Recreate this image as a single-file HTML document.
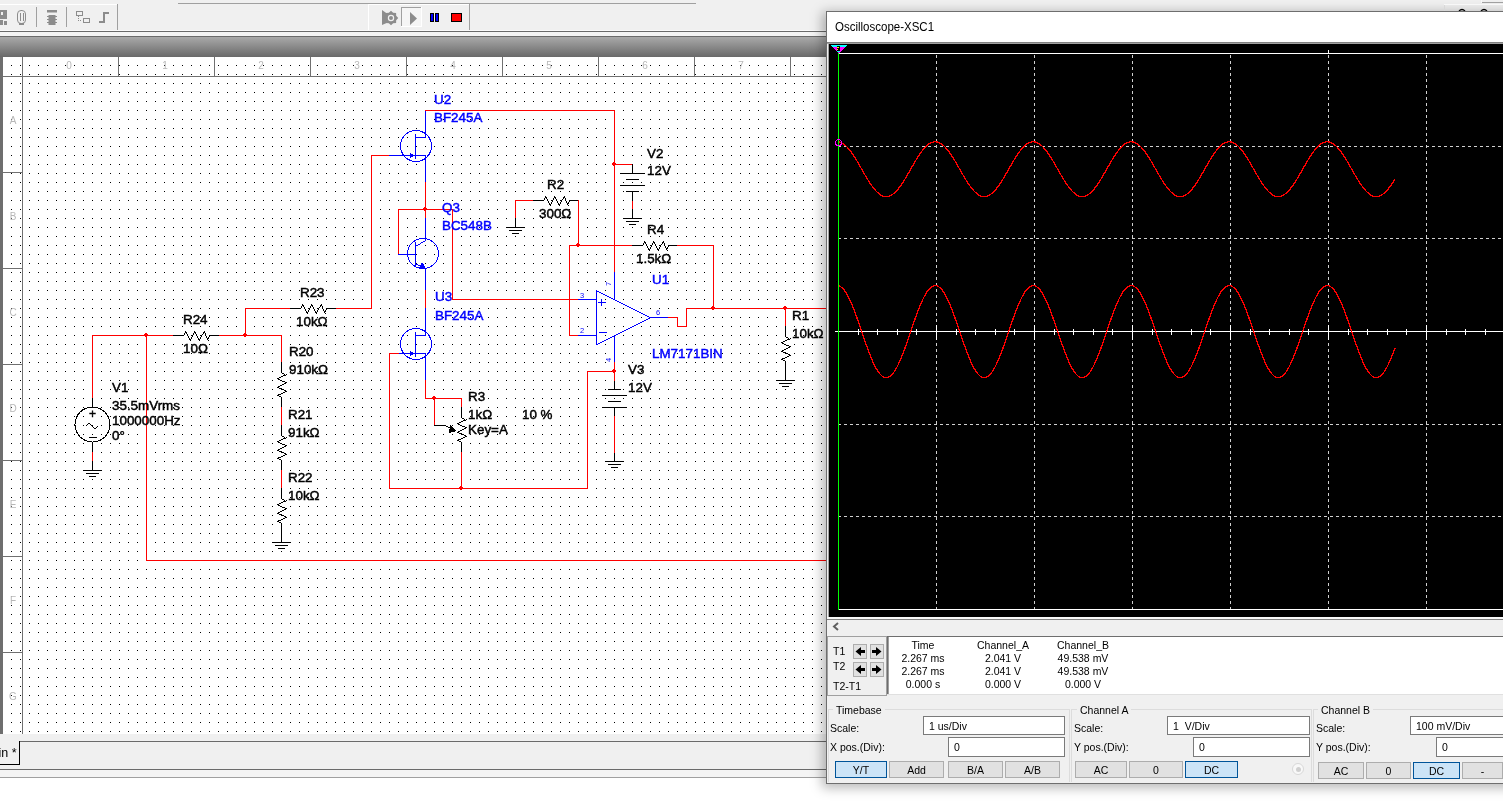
<!DOCTYPE html>
<html><head><meta charset="utf-8"><style>
*{margin:0;padding:0;box-sizing:border-box}
html,body{width:1503px;height:804px;overflow:hidden;background:#f0f0f0;font-family:"Liberation Sans",sans-serif}
.abs{position:absolute}
svg text{font-family:"Liberation Sans",sans-serif}
.ui{font-size:10.5px;color:#000;position:absolute;white-space:nowrap}
.btn{position:absolute;background:#e1e1e1;border:1px solid #adadad;font-size:10.5px;text-align:center;color:#000}
.sel{background:#cce4f7;border-color:#005499}
.inp{position:absolute;background:#fff;border:1px solid #7a7a7a;font-size:10.5px;padding-left:5px;line-height:18px}
</style></head><body><div style="position:absolute;left:0;top:0;width:1503px;height:804px;will-change:transform;overflow:hidden">
<svg class="abs" style="left:0;top:0" width="1503" height="804" shape-rendering="crispEdges">
<defs>
<pattern id="dots" x="11" y="65" width="9" height="9" patternUnits="userSpaceOnUse"><rect width="1" height="1" fill="#000"/></pattern>
<linearGradient id="gbar" x1="0" y1="0" x2="0" y2="1"><stop offset="0" stop-color="#a9a9a9"/><stop offset="1" stop-color="#696969"/></linearGradient>
</defs>
<!-- top toolbar -->
<rect x="0" y="0" width="1503" height="31" fill="#f0f0f0"/>
<line x1="178" y1="3.5" x2="696" y2="3.5" stroke="#a0a0a0"/>
<rect x="0" y="4" width="118" height="1" fill="#fff"/>
<rect x="117" y="4" width="1" height="27" fill="#a0a0a0"/>
<rect x="36" y="7" width="1" height="20" fill="#a0a0a0"/>
<rect x="66" y="7" width="1" height="20" fill="#a0a0a0"/>
<rect x="368" y="4" width="102" height="1" fill="#fff"/>
<rect x="368" y="4" width="1" height="27" fill="#fff"/>
<rect x="469" y="4" width="1" height="27" fill="#a0a0a0"/>
<rect x="0" y="30" width="1503" height="1" fill="#fafafa"/>
<rect x="0" y="31" width="1503" height="1" fill="#6a6a6a"/>
<rect x="0" y="32" width="1503" height="4" fill="#f4f4f4"/>
<rect x="0" y="36" width="1503" height="1" fill="#6a6a6a"/>
<rect x="0" y="37" width="1503" height="20" fill="url(#gbar)"/>
<rect x="0" y="57" width="3" height="677" fill="#6e6e6e"/>
<!-- canvas -->
<rect x="3" y="57" width="823" height="677" fill="#fff"/>
<rect x="3" y="57" width="823" height="677" fill="url(#dots)"/>
<rect x="3" y="76" width="823" height="1" fill="#707070"/>
<rect x="22" y="57" width="1" height="677" fill="#707070"/>
<rect x="22" y="57" width="1" height="19" fill="#707070"/>
<text x="69" y="69" fill="#b8b8b8" font-size="10" text-anchor="middle" shape-rendering="auto">0</text>
<rect x="118" y="57" width="1" height="19" fill="#707070"/>
<text x="165" y="69" fill="#b8b8b8" font-size="10" text-anchor="middle" shape-rendering="auto">1</text>
<rect x="214" y="57" width="1" height="19" fill="#707070"/>
<text x="261" y="69" fill="#b8b8b8" font-size="10" text-anchor="middle" shape-rendering="auto">2</text>
<rect x="310" y="57" width="1" height="19" fill="#707070"/>
<text x="357" y="69" fill="#b8b8b8" font-size="10" text-anchor="middle" shape-rendering="auto">3</text>
<rect x="406" y="57" width="1" height="19" fill="#707070"/>
<text x="453" y="69" fill="#b8b8b8" font-size="10" text-anchor="middle" shape-rendering="auto">4</text>
<rect x="502" y="57" width="1" height="19" fill="#707070"/>
<text x="549" y="69" fill="#b8b8b8" font-size="10" text-anchor="middle" shape-rendering="auto">5</text>
<rect x="598" y="57" width="1" height="19" fill="#707070"/>
<text x="645" y="69" fill="#b8b8b8" font-size="10" text-anchor="middle" shape-rendering="auto">6</text>
<rect x="694" y="57" width="1" height="19" fill="#707070"/>
<text x="741" y="69" fill="#b8b8b8" font-size="10" text-anchor="middle" shape-rendering="auto">7</text>
<rect x="790" y="57" width="1" height="19" fill="#707070"/>
<rect x="3" y="172" width="19" height="1" fill="#707070"/>
<rect x="3" y="268" width="19" height="1" fill="#707070"/>
<rect x="3" y="364" width="19" height="1" fill="#707070"/>
<rect x="3" y="460" width="19" height="1" fill="#707070"/>
<rect x="3" y="556" width="19" height="1" fill="#707070"/>
<rect x="3" y="652" width="19" height="1" fill="#707070"/>
<rect x="3" y="748" width="19" height="1" fill="#707070"/>
<text x="13" y="124" fill="#b8b8b8" font-size="10" text-anchor="middle">A</text>
<text x="13" y="220" fill="#b8b8b8" font-size="10" text-anchor="middle">B</text>
<text x="13" y="316" fill="#b8b8b8" font-size="10" text-anchor="middle">C</text>
<text x="13" y="412" fill="#b8b8b8" font-size="10" text-anchor="middle">D</text>
<text x="13" y="508" fill="#b8b8b8" font-size="10" text-anchor="middle">E</text>
<text x="13" y="604" fill="#b8b8b8" font-size="10" text-anchor="middle">F</text>
<text x="13" y="700" fill="#b8b8b8" font-size="10" text-anchor="middle">G</text>
<g shape-rendering="crispEdges">
<polyline points="92.5,398.5 92.5,335.5 173.5,335.5" fill="none" stroke="#ff0000" stroke-width="1" stroke-linecap="square" stroke-linejoin="bevel"/>
<polyline points="219.5,335.5 281.5,335.5 281.5,362.5" fill="none" stroke="#ff0000" stroke-width="1" stroke-linecap="square" stroke-linejoin="bevel"/>
<polyline points="146.5,335.5 146.5,560.5 826.5,560.5" fill="none" stroke="#ff0000" stroke-width="1" stroke-linecap="square" stroke-linejoin="bevel"/>
<polyline points="245.5,335.5 245.5,308.5 290.5,308.5" fill="none" stroke="#ff0000" stroke-width="1" stroke-linecap="square" stroke-linejoin="bevel"/>
<polyline points="335.5,308.5 371.5,308.5 371.5,155.5 389.5,155.5" fill="none" stroke="#ff0000" stroke-width="1" stroke-linecap="square" stroke-linejoin="bevel"/>
<polyline points="389.5,155.5 416.5,155.5" fill="none" stroke="#0000ff" stroke-width="1" stroke-linecap="square" stroke-linejoin="bevel"/>
<circle cx="416" cy="146" r="15.5" fill="none" stroke="#0000ff" stroke-width="1"/>
<polyline points="415.5,134.5 415.5,158.5" fill="none" stroke="#0000ff" stroke-width="1" stroke-linecap="square" stroke-linejoin="bevel"/>
<polyline points="415.5,137.5 425.5,137.5" fill="none" stroke="#0000ff" stroke-width="1" stroke-linecap="square" stroke-linejoin="bevel"/>
<polyline points="415.5,155.5 425.5,155.5" fill="none" stroke="#0000ff" stroke-width="1" stroke-linecap="square" stroke-linejoin="bevel"/>
<polygon points="410,152.5 414,155.5 410,158.5" fill="#0000ff"/>
<polyline points="425.5,137.5 425.5,110.5" fill="none" stroke="#0000ff" stroke-width="1" stroke-linecap="square" stroke-linejoin="bevel"/>
<polyline points="425.5,110.5 614.5,110.5 614.5,272.5" fill="none" stroke="#ff0000" stroke-width="1" stroke-linecap="square" stroke-linejoin="bevel"/>
<polyline points="614.5,272.5 614.5,299.5" fill="none" stroke="#0000ff" stroke-width="1" stroke-linecap="square" stroke-linejoin="bevel"/>
<polyline points="425.5,155.5 425.5,182.5" fill="none" stroke="#0000ff" stroke-width="1" stroke-linecap="square" stroke-linejoin="bevel"/>
<polyline points="425.5,182.5 425.5,218.5" fill="none" stroke="#ff0000" stroke-width="1" stroke-linecap="square" stroke-linejoin="bevel"/>
<polyline points="425.5,218.5 425.5,239.5" fill="none" stroke="#0000ff" stroke-width="1" stroke-linecap="square" stroke-linejoin="bevel"/>
<polyline points="398.5,254.5 398.5,209.5 452.5,209.5 452.5,299.5 578.5,299.5" fill="none" stroke="#ff0000" stroke-width="1" stroke-linecap="square" stroke-linejoin="bevel"/>
<polyline points="398.5,254.5 415.5,254.5" fill="none" stroke="#0000ff" stroke-width="1" stroke-linecap="square" stroke-linejoin="bevel"/>
<ellipse cx="423" cy="253.5" rx="15.5" ry="15" fill="none" stroke="#0000ff" stroke-width="1"/>
<polyline points="415.5,242.5 415.5,265.5" fill="none" stroke="#0000ff" stroke-width="1" stroke-linecap="square" stroke-linejoin="bevel"/>
<g fill="#0000ff"><rect x="415" y="246" width="1" height="1"/><rect x="416" y="245" width="1" height="1"/><rect x="417" y="245" width="1" height="1"/><rect x="418" y="244" width="1" height="1"/><rect x="419" y="244" width="1" height="1"/><rect x="420" y="243" width="1" height="1"/><rect x="421" y="242" width="1" height="1"/><rect x="422" y="242" width="1" height="1"/><rect x="423" y="241" width="1" height="1"/><rect x="424" y="241" width="1" height="1"/><rect x="425" y="240" width="1" height="1"/></g>
<g fill="#0000ff"><rect x="415" y="263" width="1" height="1"/><rect x="416" y="264" width="1" height="1"/><rect x="417" y="264" width="1" height="1"/><rect x="418" y="265" width="1" height="1"/><rect x="419" y="265" width="1" height="1"/><rect x="420" y="266" width="1" height="1"/><rect x="421" y="266" width="1" height="1"/><rect x="422" y="267" width="1" height="1"/><rect x="423" y="267" width="1" height="1"/><rect x="424" y="268" width="1" height="1"/><rect x="425" y="268" width="1" height="1"/></g>
<polygon points="422,262 419,268.5 426,268.5" fill="#0000ff"/>
<polyline points="425.5,269.5 425.5,290.5" fill="none" stroke="#0000ff" stroke-width="1" stroke-linecap="square" stroke-linejoin="bevel"/>
<polyline points="425.5,290.5 425.5,308.5" fill="none" stroke="#ff0000" stroke-width="1" stroke-linecap="square" stroke-linejoin="bevel"/>
<polyline points="425.5,308.5 425.5,335.5" fill="none" stroke="#0000ff" stroke-width="1" stroke-linecap="square" stroke-linejoin="bevel"/>
<circle cx="416" cy="344" r="15.5" fill="none" stroke="#0000ff" stroke-width="1"/>
<polyline points="415.5,332.5 415.5,356.5" fill="none" stroke="#0000ff" stroke-width="1" stroke-linecap="square" stroke-linejoin="bevel"/>
<polyline points="415.5,335.5 425.5,335.5" fill="none" stroke="#0000ff" stroke-width="1" stroke-linecap="square" stroke-linejoin="bevel"/>
<polyline points="415.5,353.5 425.5,353.5" fill="none" stroke="#0000ff" stroke-width="1" stroke-linecap="square" stroke-linejoin="bevel"/>
<polygon points="410,350.5 414,353.5 410,356.5" fill="#0000ff"/>
<polyline points="425.5,353.5 425.5,380.5" fill="none" stroke="#0000ff" stroke-width="1" stroke-linecap="square" stroke-linejoin="bevel"/>
<polyline points="425.5,380.5 425.5,398.5 461.5,398.5 461.5,407.5" fill="none" stroke="#ff0000" stroke-width="1" stroke-linecap="square" stroke-linejoin="bevel"/>
<polyline points="398.5,353.5 416.5,353.5" fill="none" stroke="#0000ff" stroke-width="1" stroke-linecap="square" stroke-linejoin="bevel"/>
<polyline points="398.5,353.5 389.5,353.5 389.5,488.5 587.5,488.5 587.5,371.5 614.5,371.5" fill="none" stroke="#ff0000" stroke-width="1" stroke-linecap="square" stroke-linejoin="bevel"/>
<polyline points="614.5,362.5 614.5,336.5" fill="none" stroke="#0000ff" stroke-width="1" stroke-linecap="square" stroke-linejoin="bevel"/>
<polyline points="614.5,362.5 614.5,371.5" fill="none" stroke="#ff0000" stroke-width="1" stroke-linecap="square" stroke-linejoin="bevel"/>
<polyline points="461.5,407.5 461.5,417.5" fill="none" stroke="#000000" stroke-width="1" stroke-linecap="square" stroke-linejoin="bevel"/>
<g fill="#000000"><rect x="457" y="423" width="1" height="1"/><rect x="457" y="432" width="1" height="1"/><rect x="457" y="440" width="1" height="1"/><rect x="458" y="423" width="1" height="1"/><rect x="458" y="424" width="1" height="1"/><rect x="458" y="431" width="1" height="1"/><rect x="458" y="432" width="1" height="1"/><rect x="458" y="439" width="1" height="1"/><rect x="458" y="440" width="1" height="1"/><rect x="459" y="422" width="1" height="1"/><rect x="459" y="424" width="1" height="1"/><rect x="459" y="431" width="1" height="1"/><rect x="459" y="433" width="1" height="1"/><rect x="459" y="439" width="1" height="1"/><rect x="459" y="441" width="1" height="1"/><rect x="460" y="422" width="1" height="1"/><rect x="460" y="425" width="1" height="1"/><rect x="460" y="430" width="1" height="1"/><rect x="460" y="433" width="1" height="1"/><rect x="460" y="439" width="1" height="1"/><rect x="460" y="441" width="1" height="1"/><rect x="461" y="417" width="1" height="1"/><rect x="461" y="421" width="1" height="1"/><rect x="461" y="425" width="1" height="1"/><rect x="461" y="430" width="1" height="1"/><rect x="461" y="433" width="1" height="1"/><rect x="461" y="438" width="1" height="1"/><rect x="461" y="442" width="1" height="1"/><rect x="462" y="418" width="1" height="1"/><rect x="462" y="421" width="1" height="1"/><rect x="462" y="426" width="1" height="1"/><rect x="462" y="429" width="1" height="1"/><rect x="462" y="434" width="1" height="1"/><rect x="462" y="438" width="1" height="1"/><rect x="463" y="418" width="1" height="1"/><rect x="463" y="420" width="1" height="1"/><rect x="463" y="426" width="1" height="1"/><rect x="463" y="429" width="1" height="1"/><rect x="463" y="434" width="1" height="1"/><rect x="463" y="437" width="1" height="1"/><rect x="464" y="419" width="1" height="1"/><rect x="464" y="420" width="1" height="1"/><rect x="464" y="426" width="1" height="1"/><rect x="464" y="428" width="1" height="1"/><rect x="464" y="435" width="1" height="1"/><rect x="464" y="437" width="1" height="1"/><rect x="465" y="420" width="1" height="1"/><rect x="465" y="427" width="1" height="1"/><rect x="465" y="428" width="1" height="1"/><rect x="465" y="435" width="1" height="1"/><rect x="465" y="436" width="1" height="1"/><rect x="466" y="419" width="1" height="1"/><rect x="466" y="427" width="1" height="1"/><rect x="466" y="436" width="1" height="1"/></g>
<polyline points="461.5,442.5 461.5,452.5" fill="none" stroke="#000000" stroke-width="1" stroke-linecap="square" stroke-linejoin="bevel"/>
<polyline points="461.5,452.5 461.5,488.5" fill="none" stroke="#ff0000" stroke-width="1" stroke-linecap="square" stroke-linejoin="bevel"/>
<polyline points="434.5,398.5 434.5,425.5" fill="none" stroke="#ff0000" stroke-width="1" stroke-linecap="square" stroke-linejoin="bevel"/>
<polyline points="434.5,425.5 445.5,425.5" fill="none" stroke="#000000" stroke-width="1" stroke-linecap="square" stroke-linejoin="bevel"/>
<g fill="#000000"><rect x="445" y="425" width="1" height="1"/><rect x="446" y="426" width="1" height="1"/><rect x="447" y="426" width="1" height="1"/><rect x="448" y="427" width="1" height="1"/><rect x="449" y="427" width="1" height="1"/><rect x="450" y="428" width="1" height="1"/><rect x="451" y="428" width="1" height="1"/><rect x="452" y="429" width="1" height="1"/><rect x="453" y="429" width="1" height="1"/><rect x="454" y="430" width="1" height="1"/><rect x="455" y="430" width="1" height="1"/></g>
<polygon points="450,425 457,431 449,433" fill="#000000"/>
<polyline points="281.5,362.5 281.5,372.5" fill="none" stroke="#000000" stroke-width="1" stroke-linecap="square" stroke-linejoin="bevel"/>
<g fill="#000000"><rect x="277" y="378" width="1" height="1"/><rect x="277" y="387" width="1" height="1"/><rect x="277" y="395" width="1" height="1"/><rect x="278" y="378" width="1" height="1"/><rect x="278" y="379" width="1" height="1"/><rect x="278" y="386" width="1" height="1"/><rect x="278" y="387" width="1" height="1"/><rect x="278" y="394" width="1" height="1"/><rect x="278" y="395" width="1" height="1"/><rect x="279" y="377" width="1" height="1"/><rect x="279" y="379" width="1" height="1"/><rect x="279" y="386" width="1" height="1"/><rect x="279" y="388" width="1" height="1"/><rect x="279" y="394" width="1" height="1"/><rect x="279" y="396" width="1" height="1"/><rect x="280" y="377" width="1" height="1"/><rect x="280" y="380" width="1" height="1"/><rect x="280" y="385" width="1" height="1"/><rect x="280" y="388" width="1" height="1"/><rect x="280" y="394" width="1" height="1"/><rect x="280" y="396" width="1" height="1"/><rect x="281" y="372" width="1" height="1"/><rect x="281" y="376" width="1" height="1"/><rect x="281" y="380" width="1" height="1"/><rect x="281" y="385" width="1" height="1"/><rect x="281" y="388" width="1" height="1"/><rect x="281" y="393" width="1" height="1"/><rect x="281" y="397" width="1" height="1"/><rect x="282" y="373" width="1" height="1"/><rect x="282" y="376" width="1" height="1"/><rect x="282" y="381" width="1" height="1"/><rect x="282" y="384" width="1" height="1"/><rect x="282" y="389" width="1" height="1"/><rect x="282" y="393" width="1" height="1"/><rect x="283" y="373" width="1" height="1"/><rect x="283" y="375" width="1" height="1"/><rect x="283" y="381" width="1" height="1"/><rect x="283" y="384" width="1" height="1"/><rect x="283" y="389" width="1" height="1"/><rect x="283" y="392" width="1" height="1"/><rect x="284" y="374" width="1" height="1"/><rect x="284" y="375" width="1" height="1"/><rect x="284" y="381" width="1" height="1"/><rect x="284" y="383" width="1" height="1"/><rect x="284" y="390" width="1" height="1"/><rect x="284" y="392" width="1" height="1"/><rect x="285" y="375" width="1" height="1"/><rect x="285" y="382" width="1" height="1"/><rect x="285" y="383" width="1" height="1"/><rect x="285" y="390" width="1" height="1"/><rect x="285" y="391" width="1" height="1"/><rect x="286" y="374" width="1" height="1"/><rect x="286" y="382" width="1" height="1"/><rect x="286" y="391" width="1" height="1"/></g>
<polyline points="281.5,397.5 281.5,407.5" fill="none" stroke="#000000" stroke-width="1" stroke-linecap="square" stroke-linejoin="bevel"/>
<polyline points="281.5,407.5 281.5,425.5" fill="none" stroke="#ff0000" stroke-width="1" stroke-linecap="square" stroke-linejoin="bevel"/>
<polyline points="281.5,425.5 281.5,435.5" fill="none" stroke="#000000" stroke-width="1" stroke-linecap="square" stroke-linejoin="bevel"/>
<g fill="#000000"><rect x="277" y="441" width="1" height="1"/><rect x="277" y="450" width="1" height="1"/><rect x="277" y="458" width="1" height="1"/><rect x="278" y="441" width="1" height="1"/><rect x="278" y="442" width="1" height="1"/><rect x="278" y="449" width="1" height="1"/><rect x="278" y="450" width="1" height="1"/><rect x="278" y="457" width="1" height="1"/><rect x="278" y="458" width="1" height="1"/><rect x="279" y="440" width="1" height="1"/><rect x="279" y="442" width="1" height="1"/><rect x="279" y="449" width="1" height="1"/><rect x="279" y="451" width="1" height="1"/><rect x="279" y="457" width="1" height="1"/><rect x="279" y="459" width="1" height="1"/><rect x="280" y="440" width="1" height="1"/><rect x="280" y="443" width="1" height="1"/><rect x="280" y="448" width="1" height="1"/><rect x="280" y="451" width="1" height="1"/><rect x="280" y="457" width="1" height="1"/><rect x="280" y="459" width="1" height="1"/><rect x="281" y="435" width="1" height="1"/><rect x="281" y="439" width="1" height="1"/><rect x="281" y="443" width="1" height="1"/><rect x="281" y="448" width="1" height="1"/><rect x="281" y="451" width="1" height="1"/><rect x="281" y="456" width="1" height="1"/><rect x="281" y="460" width="1" height="1"/><rect x="282" y="436" width="1" height="1"/><rect x="282" y="439" width="1" height="1"/><rect x="282" y="444" width="1" height="1"/><rect x="282" y="447" width="1" height="1"/><rect x="282" y="452" width="1" height="1"/><rect x="282" y="456" width="1" height="1"/><rect x="283" y="436" width="1" height="1"/><rect x="283" y="438" width="1" height="1"/><rect x="283" y="444" width="1" height="1"/><rect x="283" y="447" width="1" height="1"/><rect x="283" y="452" width="1" height="1"/><rect x="283" y="455" width="1" height="1"/><rect x="284" y="437" width="1" height="1"/><rect x="284" y="438" width="1" height="1"/><rect x="284" y="444" width="1" height="1"/><rect x="284" y="446" width="1" height="1"/><rect x="284" y="453" width="1" height="1"/><rect x="284" y="455" width="1" height="1"/><rect x="285" y="438" width="1" height="1"/><rect x="285" y="445" width="1" height="1"/><rect x="285" y="446" width="1" height="1"/><rect x="285" y="453" width="1" height="1"/><rect x="285" y="454" width="1" height="1"/><rect x="286" y="437" width="1" height="1"/><rect x="286" y="445" width="1" height="1"/><rect x="286" y="454" width="1" height="1"/></g>
<polyline points="281.5,460.5 281.5,470.5" fill="none" stroke="#000000" stroke-width="1" stroke-linecap="square" stroke-linejoin="bevel"/>
<polyline points="281.5,470.5 281.5,488.5" fill="none" stroke="#ff0000" stroke-width="1" stroke-linecap="square" stroke-linejoin="bevel"/>
<polyline points="281.5,488.5 281.5,498.5" fill="none" stroke="#000000" stroke-width="1" stroke-linecap="square" stroke-linejoin="bevel"/>
<g fill="#000000"><rect x="277" y="504" width="1" height="1"/><rect x="277" y="513" width="1" height="1"/><rect x="277" y="521" width="1" height="1"/><rect x="278" y="504" width="1" height="1"/><rect x="278" y="505" width="1" height="1"/><rect x="278" y="512" width="1" height="1"/><rect x="278" y="513" width="1" height="1"/><rect x="278" y="520" width="1" height="1"/><rect x="278" y="521" width="1" height="1"/><rect x="279" y="503" width="1" height="1"/><rect x="279" y="505" width="1" height="1"/><rect x="279" y="512" width="1" height="1"/><rect x="279" y="514" width="1" height="1"/><rect x="279" y="520" width="1" height="1"/><rect x="279" y="522" width="1" height="1"/><rect x="280" y="503" width="1" height="1"/><rect x="280" y="506" width="1" height="1"/><rect x="280" y="511" width="1" height="1"/><rect x="280" y="514" width="1" height="1"/><rect x="280" y="520" width="1" height="1"/><rect x="280" y="522" width="1" height="1"/><rect x="281" y="498" width="1" height="1"/><rect x="281" y="502" width="1" height="1"/><rect x="281" y="506" width="1" height="1"/><rect x="281" y="511" width="1" height="1"/><rect x="281" y="514" width="1" height="1"/><rect x="281" y="519" width="1" height="1"/><rect x="281" y="523" width="1" height="1"/><rect x="282" y="499" width="1" height="1"/><rect x="282" y="502" width="1" height="1"/><rect x="282" y="507" width="1" height="1"/><rect x="282" y="510" width="1" height="1"/><rect x="282" y="515" width="1" height="1"/><rect x="282" y="519" width="1" height="1"/><rect x="283" y="499" width="1" height="1"/><rect x="283" y="501" width="1" height="1"/><rect x="283" y="507" width="1" height="1"/><rect x="283" y="510" width="1" height="1"/><rect x="283" y="515" width="1" height="1"/><rect x="283" y="518" width="1" height="1"/><rect x="284" y="500" width="1" height="1"/><rect x="284" y="501" width="1" height="1"/><rect x="284" y="507" width="1" height="1"/><rect x="284" y="509" width="1" height="1"/><rect x="284" y="516" width="1" height="1"/><rect x="284" y="518" width="1" height="1"/><rect x="285" y="501" width="1" height="1"/><rect x="285" y="508" width="1" height="1"/><rect x="285" y="509" width="1" height="1"/><rect x="285" y="516" width="1" height="1"/><rect x="285" y="517" width="1" height="1"/><rect x="286" y="500" width="1" height="1"/><rect x="286" y="508" width="1" height="1"/><rect x="286" y="517" width="1" height="1"/></g>
<polyline points="281.5,523.5 281.5,542.5" fill="none" stroke="#000000" stroke-width="1" stroke-linecap="square" stroke-linejoin="bevel"/>
<polyline points="272.5,542.5 290.5,542.5" fill="none" stroke="#000000" stroke-width="1" stroke-linecap="square" stroke-linejoin="bevel"/>
<polyline points="275.5,545.5 287.5,545.5" fill="none" stroke="#000000" stroke-width="1" stroke-linecap="square" stroke-linejoin="bevel"/>
<polyline points="278.5,548.5 284.5,548.5" fill="none" stroke="#000000" stroke-width="1" stroke-linecap="square" stroke-linejoin="bevel"/>
<polyline points="173.5,335.5 183.5,335.5" fill="none" stroke="#000000" stroke-width="1" stroke-linecap="square" stroke-linejoin="bevel"/>
<g fill="#000000"><rect x="183" y="335" width="1" height="1"/><rect x="184" y="333" width="1" height="1"/><rect x="184" y="334" width="1" height="1"/><rect x="185" y="331" width="1" height="1"/><rect x="185" y="332" width="1" height="1"/><rect x="186" y="332" width="1" height="1"/><rect x="186" y="333" width="1" height="1"/><rect x="187" y="334" width="1" height="1"/><rect x="187" y="335" width="1" height="1"/><rect x="188" y="336" width="1" height="1"/><rect x="188" y="337" width="1" height="1"/><rect x="189" y="338" width="1" height="1"/><rect x="189" y="339" width="1" height="1"/><rect x="190" y="339" width="1" height="1"/><rect x="190" y="340" width="1" height="1"/><rect x="191" y="337" width="1" height="1"/><rect x="191" y="338" width="1" height="1"/><rect x="192" y="335" width="1" height="1"/><rect x="192" y="336" width="1" height="1"/><rect x="193" y="333" width="1" height="1"/><rect x="193" y="334" width="1" height="1"/><rect x="194" y="331" width="1" height="1"/><rect x="194" y="332" width="1" height="1"/><rect x="195" y="332" width="1" height="1"/><rect x="195" y="333" width="1" height="1"/><rect x="196" y="334" width="1" height="1"/><rect x="196" y="335" width="1" height="1"/><rect x="197" y="336" width="1" height="1"/><rect x="197" y="337" width="1" height="1"/><rect x="198" y="338" width="1" height="1"/><rect x="198" y="339" width="1" height="1"/><rect x="199" y="339" width="1" height="1"/><rect x="199" y="340" width="1" height="1"/><rect x="200" y="337" width="1" height="1"/><rect x="200" y="338" width="1" height="1"/><rect x="201" y="335" width="1" height="1"/><rect x="201" y="336" width="1" height="1"/><rect x="202" y="334" width="1" height="1"/><rect x="203" y="332" width="1" height="1"/><rect x="203" y="333" width="1" height="1"/><rect x="204" y="331" width="1" height="1"/><rect x="204" y="332" width="1" height="1"/><rect x="205" y="333" width="1" height="1"/><rect x="205" y="334" width="1" height="1"/><rect x="205" y="335" width="1" height="1"/><rect x="206" y="336" width="1" height="1"/><rect x="206" y="337" width="1" height="1"/><rect x="207" y="338" width="1" height="1"/><rect x="207" y="339" width="1" height="1"/><rect x="208" y="337" width="1" height="1"/><rect x="208" y="338" width="1" height="1"/><rect x="208" y="340" width="1" height="1"/><rect x="209" y="335" width="1" height="1"/><rect x="209" y="336" width="1" height="1"/></g>
<polyline points="209.5,335.5 218.5,335.5" fill="none" stroke="#000000" stroke-width="1" stroke-linecap="square" stroke-linejoin="bevel"/>
<polyline points="290.5,308.5 300.5,308.5" fill="none" stroke="#000000" stroke-width="1" stroke-linecap="square" stroke-linejoin="bevel"/>
<g fill="#000000"><rect x="300" y="308" width="1" height="1"/><rect x="301" y="306" width="1" height="1"/><rect x="301" y="307" width="1" height="1"/><rect x="302" y="304" width="1" height="1"/><rect x="302" y="305" width="1" height="1"/><rect x="303" y="305" width="1" height="1"/><rect x="303" y="306" width="1" height="1"/><rect x="304" y="307" width="1" height="1"/><rect x="304" y="308" width="1" height="1"/><rect x="305" y="309" width="1" height="1"/><rect x="305" y="310" width="1" height="1"/><rect x="306" y="311" width="1" height="1"/><rect x="306" y="312" width="1" height="1"/><rect x="307" y="312" width="1" height="1"/><rect x="307" y="313" width="1" height="1"/><rect x="308" y="310" width="1" height="1"/><rect x="308" y="311" width="1" height="1"/><rect x="309" y="308" width="1" height="1"/><rect x="309" y="309" width="1" height="1"/><rect x="310" y="306" width="1" height="1"/><rect x="310" y="307" width="1" height="1"/><rect x="311" y="304" width="1" height="1"/><rect x="311" y="305" width="1" height="1"/><rect x="312" y="305" width="1" height="1"/><rect x="312" y="306" width="1" height="1"/><rect x="313" y="307" width="1" height="1"/><rect x="313" y="308" width="1" height="1"/><rect x="314" y="309" width="1" height="1"/><rect x="314" y="310" width="1" height="1"/><rect x="315" y="311" width="1" height="1"/><rect x="315" y="312" width="1" height="1"/><rect x="316" y="312" width="1" height="1"/><rect x="316" y="313" width="1" height="1"/><rect x="317" y="310" width="1" height="1"/><rect x="317" y="311" width="1" height="1"/><rect x="318" y="308" width="1" height="1"/><rect x="318" y="309" width="1" height="1"/><rect x="319" y="307" width="1" height="1"/><rect x="320" y="305" width="1" height="1"/><rect x="320" y="306" width="1" height="1"/><rect x="321" y="304" width="1" height="1"/><rect x="321" y="305" width="1" height="1"/><rect x="322" y="306" width="1" height="1"/><rect x="322" y="307" width="1" height="1"/><rect x="322" y="308" width="1" height="1"/><rect x="323" y="309" width="1" height="1"/><rect x="323" y="310" width="1" height="1"/><rect x="324" y="311" width="1" height="1"/><rect x="324" y="312" width="1" height="1"/><rect x="325" y="310" width="1" height="1"/><rect x="325" y="311" width="1" height="1"/><rect x="325" y="313" width="1" height="1"/><rect x="326" y="308" width="1" height="1"/><rect x="326" y="309" width="1" height="1"/></g>
<polyline points="326.5,308.5 335.5,308.5" fill="none" stroke="#000000" stroke-width="1" stroke-linecap="square" stroke-linejoin="bevel"/>
<polyline points="92.5,398.5 92.5,407.5" fill="none" stroke="#000000" stroke-width="1" stroke-linecap="square" stroke-linejoin="bevel"/>
<circle cx="92.5" cy="424.5" r="17.5" fill="none" stroke="#000000" stroke-width="1"/>
<polyline points="92.5,442.5 92.5,452.5" fill="none" stroke="#000000" stroke-width="1" stroke-linecap="square" stroke-linejoin="bevel"/>
<polyline points="92.5,452.5 92.5,461.5" fill="none" stroke="#ff0000" stroke-width="1" stroke-linecap="square" stroke-linejoin="bevel"/>
<polyline points="92.5,461.5 92.5,470.5" fill="none" stroke="#000000" stroke-width="1" stroke-linecap="square" stroke-linejoin="bevel"/>
<polyline points="83.5,470.5 101.5,470.5" fill="none" stroke="#000000" stroke-width="1" stroke-linecap="square" stroke-linejoin="bevel"/>
<polyline points="86.5,473.5 98.5,473.5" fill="none" stroke="#000000" stroke-width="1" stroke-linecap="square" stroke-linejoin="bevel"/>
<polyline points="89.5,476.5 95.5,476.5" fill="none" stroke="#000000" stroke-width="1" stroke-linecap="square" stroke-linejoin="bevel"/>
<text x="92.5" y="418" fill="#000000" stroke="#000000" stroke-width="0.45" font-size="12" text-anchor="middle" >+</text>
<path d="M86,426 q3,-5 6,0 t6,0" fill="none" stroke="#000000" stroke-width="1"/>
<polyline points="89.5,437.5 96.5,437.5" fill="none" stroke="#000000" stroke-width="1" stroke-linecap="square" stroke-linejoin="bevel"/>
<polyline points="515.5,218.5 515.5,200.5 533.5,200.5" fill="none" stroke="#ff0000" stroke-width="1" stroke-linecap="square" stroke-linejoin="bevel"/>
<polyline points="515.5,218.5 515.5,227.5" fill="none" stroke="#000000" stroke-width="1" stroke-linecap="square" stroke-linejoin="bevel"/>
<polyline points="506.5,227.5 524.5,227.5" fill="none" stroke="#000000" stroke-width="1" stroke-linecap="square" stroke-linejoin="bevel"/>
<polyline points="509.5,230.5 521.5,230.5" fill="none" stroke="#000000" stroke-width="1" stroke-linecap="square" stroke-linejoin="bevel"/>
<polyline points="512.5,233.5 518.5,233.5" fill="none" stroke="#000000" stroke-width="1" stroke-linecap="square" stroke-linejoin="bevel"/>
<polyline points="533.5,200.5 543.5,200.5" fill="none" stroke="#000000" stroke-width="1" stroke-linecap="square" stroke-linejoin="bevel"/>
<g fill="#000000"><rect x="543" y="200" width="1" height="1"/><rect x="544" y="198" width="1" height="1"/><rect x="544" y="199" width="1" height="1"/><rect x="545" y="196" width="1" height="1"/><rect x="545" y="197" width="1" height="1"/><rect x="546" y="197" width="1" height="1"/><rect x="546" y="198" width="1" height="1"/><rect x="547" y="199" width="1" height="1"/><rect x="547" y="200" width="1" height="1"/><rect x="548" y="201" width="1" height="1"/><rect x="548" y="202" width="1" height="1"/><rect x="549" y="203" width="1" height="1"/><rect x="549" y="204" width="1" height="1"/><rect x="550" y="204" width="1" height="1"/><rect x="550" y="205" width="1" height="1"/><rect x="551" y="202" width="1" height="1"/><rect x="551" y="203" width="1" height="1"/><rect x="552" y="200" width="1" height="1"/><rect x="552" y="201" width="1" height="1"/><rect x="553" y="198" width="1" height="1"/><rect x="553" y="199" width="1" height="1"/><rect x="554" y="196" width="1" height="1"/><rect x="554" y="197" width="1" height="1"/><rect x="555" y="197" width="1" height="1"/><rect x="555" y="198" width="1" height="1"/><rect x="556" y="199" width="1" height="1"/><rect x="556" y="200" width="1" height="1"/><rect x="557" y="201" width="1" height="1"/><rect x="557" y="202" width="1" height="1"/><rect x="558" y="203" width="1" height="1"/><rect x="558" y="204" width="1" height="1"/><rect x="559" y="204" width="1" height="1"/><rect x="559" y="205" width="1" height="1"/><rect x="560" y="202" width="1" height="1"/><rect x="560" y="203" width="1" height="1"/><rect x="561" y="200" width="1" height="1"/><rect x="561" y="201" width="1" height="1"/><rect x="562" y="199" width="1" height="1"/><rect x="563" y="197" width="1" height="1"/><rect x="563" y="198" width="1" height="1"/><rect x="564" y="196" width="1" height="1"/><rect x="564" y="197" width="1" height="1"/><rect x="565" y="198" width="1" height="1"/><rect x="565" y="199" width="1" height="1"/><rect x="565" y="200" width="1" height="1"/><rect x="566" y="201" width="1" height="1"/><rect x="566" y="202" width="1" height="1"/><rect x="567" y="203" width="1" height="1"/><rect x="567" y="204" width="1" height="1"/><rect x="568" y="202" width="1" height="1"/><rect x="568" y="203" width="1" height="1"/><rect x="568" y="205" width="1" height="1"/><rect x="569" y="200" width="1" height="1"/><rect x="569" y="201" width="1" height="1"/></g>
<polyline points="569.5,200.5 578.5,200.5" fill="none" stroke="#000000" stroke-width="1" stroke-linecap="square" stroke-linejoin="bevel"/>
<polyline points="578.5,200.5 578.5,245.5" fill="none" stroke="#ff0000" stroke-width="1" stroke-linecap="square" stroke-linejoin="bevel"/>
<polyline points="569.5,335.5 569.5,245.5 632.5,245.5" fill="none" stroke="#ff0000" stroke-width="1" stroke-linecap="square" stroke-linejoin="bevel"/>
<polyline points="632.5,245.5 642.5,245.5" fill="none" stroke="#000000" stroke-width="1" stroke-linecap="square" stroke-linejoin="bevel"/>
<g fill="#000000"><rect x="642" y="245" width="1" height="1"/><rect x="643" y="243" width="1" height="1"/><rect x="643" y="244" width="1" height="1"/><rect x="644" y="241" width="1" height="1"/><rect x="644" y="242" width="1" height="1"/><rect x="645" y="242" width="1" height="1"/><rect x="645" y="243" width="1" height="1"/><rect x="646" y="244" width="1" height="1"/><rect x="646" y="245" width="1" height="1"/><rect x="647" y="246" width="1" height="1"/><rect x="647" y="247" width="1" height="1"/><rect x="648" y="248" width="1" height="1"/><rect x="648" y="249" width="1" height="1"/><rect x="649" y="249" width="1" height="1"/><rect x="649" y="250" width="1" height="1"/><rect x="650" y="247" width="1" height="1"/><rect x="650" y="248" width="1" height="1"/><rect x="651" y="245" width="1" height="1"/><rect x="651" y="246" width="1" height="1"/><rect x="652" y="243" width="1" height="1"/><rect x="652" y="244" width="1" height="1"/><rect x="653" y="241" width="1" height="1"/><rect x="653" y="242" width="1" height="1"/><rect x="654" y="242" width="1" height="1"/><rect x="654" y="243" width="1" height="1"/><rect x="655" y="244" width="1" height="1"/><rect x="655" y="245" width="1" height="1"/><rect x="656" y="246" width="1" height="1"/><rect x="656" y="247" width="1" height="1"/><rect x="657" y="248" width="1" height="1"/><rect x="657" y="249" width="1" height="1"/><rect x="658" y="249" width="1" height="1"/><rect x="658" y="250" width="1" height="1"/><rect x="659" y="247" width="1" height="1"/><rect x="659" y="248" width="1" height="1"/><rect x="660" y="245" width="1" height="1"/><rect x="660" y="246" width="1" height="1"/><rect x="661" y="244" width="1" height="1"/><rect x="662" y="242" width="1" height="1"/><rect x="662" y="243" width="1" height="1"/><rect x="663" y="241" width="1" height="1"/><rect x="663" y="242" width="1" height="1"/><rect x="664" y="243" width="1" height="1"/><rect x="664" y="244" width="1" height="1"/><rect x="664" y="245" width="1" height="1"/><rect x="665" y="246" width="1" height="1"/><rect x="665" y="247" width="1" height="1"/><rect x="666" y="248" width="1" height="1"/><rect x="666" y="249" width="1" height="1"/><rect x="667" y="247" width="1" height="1"/><rect x="667" y="248" width="1" height="1"/><rect x="667" y="250" width="1" height="1"/><rect x="668" y="245" width="1" height="1"/><rect x="668" y="246" width="1" height="1"/></g>
<polyline points="668.5,245.5 677.5,245.5" fill="none" stroke="#000000" stroke-width="1" stroke-linecap="square" stroke-linejoin="bevel"/>
<polyline points="677.5,245.5 713.5,245.5 713.5,308.5" fill="none" stroke="#ff0000" stroke-width="1" stroke-linecap="square" stroke-linejoin="bevel"/>
<polyline points="569.5,335.5 578.5,335.5" fill="none" stroke="#ff0000" stroke-width="1" stroke-linecap="square" stroke-linejoin="bevel"/>
<polyline points="578.5,335.5 596.5,335.5" fill="none" stroke="#0000ff" stroke-width="1" stroke-linecap="square" stroke-linejoin="bevel"/>
<polyline points="578.5,299.5 596.5,299.5" fill="none" stroke="#0000ff" stroke-width="1" stroke-linecap="square" stroke-linejoin="bevel"/>
<polyline points="596.5,290.5 596.5,344.5" fill="none" stroke="#0000ff" stroke-width="1" stroke-linecap="square" stroke-linejoin="bevel"/>
<g fill="#0000ff"><rect x="596" y="290" width="1" height="1"/><rect x="597" y="291" width="1" height="1"/><rect x="598" y="291" width="1" height="1"/><rect x="599" y="292" width="1" height="1"/><rect x="600" y="292" width="1" height="1"/><rect x="601" y="293" width="1" height="1"/><rect x="602" y="293" width="1" height="1"/><rect x="603" y="294" width="1" height="1"/><rect x="604" y="294" width="1" height="1"/><rect x="605" y="295" width="1" height="1"/><rect x="606" y="295" width="1" height="1"/><rect x="607" y="296" width="1" height="1"/><rect x="608" y="296" width="1" height="1"/><rect x="609" y="297" width="1" height="1"/><rect x="610" y="297" width="1" height="1"/><rect x="611" y="298" width="1" height="1"/><rect x="612" y="298" width="1" height="1"/><rect x="613" y="299" width="1" height="1"/><rect x="614" y="299" width="1" height="1"/><rect x="615" y="300" width="1" height="1"/><rect x="616" y="300" width="1" height="1"/><rect x="617" y="301" width="1" height="1"/><rect x="618" y="301" width="1" height="1"/><rect x="619" y="302" width="1" height="1"/><rect x="620" y="302" width="1" height="1"/><rect x="621" y="303" width="1" height="1"/><rect x="622" y="303" width="1" height="1"/><rect x="623" y="304" width="1" height="1"/><rect x="624" y="304" width="1" height="1"/><rect x="625" y="305" width="1" height="1"/><rect x="626" y="305" width="1" height="1"/><rect x="627" y="306" width="1" height="1"/><rect x="628" y="306" width="1" height="1"/><rect x="629" y="307" width="1" height="1"/><rect x="630" y="307" width="1" height="1"/><rect x="631" y="308" width="1" height="1"/><rect x="632" y="308" width="1" height="1"/><rect x="633" y="309" width="1" height="1"/><rect x="634" y="309" width="1" height="1"/><rect x="635" y="310" width="1" height="1"/><rect x="636" y="310" width="1" height="1"/><rect x="637" y="311" width="1" height="1"/><rect x="638" y="311" width="1" height="1"/><rect x="639" y="312" width="1" height="1"/><rect x="640" y="312" width="1" height="1"/><rect x="641" y="313" width="1" height="1"/><rect x="642" y="313" width="1" height="1"/><rect x="643" y="314" width="1" height="1"/><rect x="644" y="314" width="1" height="1"/><rect x="645" y="315" width="1" height="1"/><rect x="646" y="315" width="1" height="1"/><rect x="647" y="316" width="1" height="1"/><rect x="648" y="316" width="1" height="1"/><rect x="649" y="317" width="1" height="1"/><rect x="650" y="317" width="1" height="1"/></g>
<g fill="#0000ff"><rect x="596" y="344" width="1" height="1"/><rect x="597" y="344" width="1" height="1"/><rect x="598" y="343" width="1" height="1"/><rect x="599" y="343" width="1" height="1"/><rect x="600" y="342" width="1" height="1"/><rect x="601" y="342" width="1" height="1"/><rect x="602" y="341" width="1" height="1"/><rect x="603" y="341" width="1" height="1"/><rect x="604" y="340" width="1" height="1"/><rect x="605" y="340" width="1" height="1"/><rect x="606" y="339" width="1" height="1"/><rect x="607" y="339" width="1" height="1"/><rect x="608" y="338" width="1" height="1"/><rect x="609" y="338" width="1" height="1"/><rect x="610" y="337" width="1" height="1"/><rect x="611" y="337" width="1" height="1"/><rect x="612" y="336" width="1" height="1"/><rect x="613" y="336" width="1" height="1"/><rect x="614" y="335" width="1" height="1"/><rect x="615" y="335" width="1" height="1"/><rect x="616" y="334" width="1" height="1"/><rect x="617" y="334" width="1" height="1"/><rect x="618" y="333" width="1" height="1"/><rect x="619" y="333" width="1" height="1"/><rect x="620" y="332" width="1" height="1"/><rect x="621" y="332" width="1" height="1"/><rect x="622" y="331" width="1" height="1"/><rect x="623" y="331" width="1" height="1"/><rect x="624" y="330" width="1" height="1"/><rect x="625" y="330" width="1" height="1"/><rect x="626" y="329" width="1" height="1"/><rect x="627" y="329" width="1" height="1"/><rect x="628" y="328" width="1" height="1"/><rect x="629" y="328" width="1" height="1"/><rect x="630" y="327" width="1" height="1"/><rect x="631" y="327" width="1" height="1"/><rect x="632" y="326" width="1" height="1"/><rect x="633" y="326" width="1" height="1"/><rect x="634" y="325" width="1" height="1"/><rect x="635" y="325" width="1" height="1"/><rect x="636" y="324" width="1" height="1"/><rect x="637" y="324" width="1" height="1"/><rect x="638" y="323" width="1" height="1"/><rect x="639" y="323" width="1" height="1"/><rect x="640" y="322" width="1" height="1"/><rect x="641" y="322" width="1" height="1"/><rect x="642" y="321" width="1" height="1"/><rect x="643" y="321" width="1" height="1"/><rect x="644" y="320" width="1" height="1"/><rect x="645" y="320" width="1" height="1"/><rect x="646" y="319" width="1" height="1"/><rect x="647" y="319" width="1" height="1"/><rect x="648" y="318" width="1" height="1"/><rect x="649" y="318" width="1" height="1"/><rect x="650" y="317" width="1" height="1"/></g>
<polyline points="650.5,317.5 668.5,317.5" fill="none" stroke="#0000ff" stroke-width="1" stroke-linecap="square" stroke-linejoin="bevel"/>
<polyline points="598.5,302.5 605.5,302.5" fill="none" stroke="#0000ff" stroke-width="1" stroke-linecap="square" stroke-linejoin="bevel"/>
<polyline points="601.5,299.5 601.5,305.5" fill="none" stroke="#0000ff" stroke-width="1" stroke-linecap="square" stroke-linejoin="bevel"/>
<polyline points="599.5,332.5 606.5,332.5" fill="none" stroke="#0000ff" stroke-width="1" stroke-linecap="square" stroke-linejoin="bevel"/>
<polyline points="668.5,317.5 677.5,317.5 677.5,326.5 686.5,326.5 686.5,308.5 826.5,308.5" fill="none" stroke="#ff0000" stroke-width="1" stroke-linecap="square" stroke-linejoin="bevel"/>
<polyline points="614.5,164.5 632.5,164.5" fill="none" stroke="#ff0000" stroke-width="1" stroke-linecap="square" stroke-linejoin="bevel"/>
<polyline points="632.5,164.5 632.5,173.5" fill="none" stroke="#000000" stroke-width="1" stroke-linecap="square" stroke-linejoin="bevel"/>
<polyline points="620.5,173.5 644.5,173.5" fill="none" stroke="#000000" stroke-width="1" stroke-linecap="square" stroke-linejoin="bevel"/>
<polyline points="626.5,179.5 638.5,179.5" fill="none" stroke="#000000" stroke-width="1" stroke-linecap="square" stroke-linejoin="bevel"/>
<polyline points="620.5,185.5 644.5,185.5" fill="none" stroke="#000000" stroke-width="1" stroke-linecap="square" stroke-linejoin="bevel"/>
<polyline points="626.5,191.5 638.5,191.5" fill="none" stroke="#000000" stroke-width="1" stroke-linecap="square" stroke-linejoin="bevel"/>
<polyline points="632.5,191.5 632.5,201.5" fill="none" stroke="#000000" stroke-width="1" stroke-linecap="square" stroke-linejoin="bevel"/>
<polyline points="632.5,201.5 632.5,209.5" fill="none" stroke="#ff0000" stroke-width="1" stroke-linecap="square" stroke-linejoin="bevel"/>
<polyline points="632.5,209.5 632.5,218.5" fill="none" stroke="#000000" stroke-width="1" stroke-linecap="square" stroke-linejoin="bevel"/>
<polyline points="623.5,218.5 641.5,218.5" fill="none" stroke="#000000" stroke-width="1" stroke-linecap="square" stroke-linejoin="bevel"/>
<polyline points="626.5,221.5 638.5,221.5" fill="none" stroke="#000000" stroke-width="1" stroke-linecap="square" stroke-linejoin="bevel"/>
<polyline points="629.5,224.5 635.5,224.5" fill="none" stroke="#000000" stroke-width="1" stroke-linecap="square" stroke-linejoin="bevel"/>
<polyline points="614.5,380.5 614.5,389.5" fill="none" stroke="#000000" stroke-width="1" stroke-linecap="square" stroke-linejoin="bevel"/>
<polyline points="614.5,371.5 614.5,380.5" fill="none" stroke="#ff0000" stroke-width="1" stroke-linecap="square" stroke-linejoin="bevel"/>
<polyline points="608.5,389.5 620.5,389.5" fill="none" stroke="#000000" stroke-width="1" stroke-linecap="square" stroke-linejoin="bevel"/>
<polyline points="602.5,395.5 626.5,395.5" fill="none" stroke="#000000" stroke-width="1" stroke-linecap="square" stroke-linejoin="bevel"/>
<polyline points="608.5,401.5 620.5,401.5" fill="none" stroke="#000000" stroke-width="1" stroke-linecap="square" stroke-linejoin="bevel"/>
<polyline points="602.5,407.5 626.5,407.5" fill="none" stroke="#000000" stroke-width="1" stroke-linecap="square" stroke-linejoin="bevel"/>
<polyline points="614.5,407.5 614.5,416.5" fill="none" stroke="#000000" stroke-width="1" stroke-linecap="square" stroke-linejoin="bevel"/>
<polyline points="614.5,416.5 614.5,453.5" fill="none" stroke="#ff0000" stroke-width="1" stroke-linecap="square" stroke-linejoin="bevel"/>
<polyline points="614.5,453.5 614.5,461.5" fill="none" stroke="#000000" stroke-width="1" stroke-linecap="square" stroke-linejoin="bevel"/>
<polyline points="605.5,461.5 623.5,461.5" fill="none" stroke="#000000" stroke-width="1" stroke-linecap="square" stroke-linejoin="bevel"/>
<polyline points="608.5,464.5 620.5,464.5" fill="none" stroke="#000000" stroke-width="1" stroke-linecap="square" stroke-linejoin="bevel"/>
<polyline points="611.5,467.5 617.5,467.5" fill="none" stroke="#000000" stroke-width="1" stroke-linecap="square" stroke-linejoin="bevel"/>
<polyline points="785.5,308.5 785.5,326.5" fill="none" stroke="#ff0000" stroke-width="1" stroke-linecap="square" stroke-linejoin="bevel"/>
<polyline points="785.5,326.5 785.5,336.5" fill="none" stroke="#000000" stroke-width="1" stroke-linecap="square" stroke-linejoin="bevel"/>
<g fill="#000000"><rect x="781" y="342" width="1" height="1"/><rect x="781" y="351" width="1" height="1"/><rect x="781" y="359" width="1" height="1"/><rect x="782" y="342" width="1" height="1"/><rect x="782" y="343" width="1" height="1"/><rect x="782" y="350" width="1" height="1"/><rect x="782" y="351" width="1" height="1"/><rect x="782" y="358" width="1" height="1"/><rect x="782" y="359" width="1" height="1"/><rect x="783" y="341" width="1" height="1"/><rect x="783" y="343" width="1" height="1"/><rect x="783" y="350" width="1" height="1"/><rect x="783" y="352" width="1" height="1"/><rect x="783" y="358" width="1" height="1"/><rect x="783" y="360" width="1" height="1"/><rect x="784" y="341" width="1" height="1"/><rect x="784" y="344" width="1" height="1"/><rect x="784" y="349" width="1" height="1"/><rect x="784" y="352" width="1" height="1"/><rect x="784" y="358" width="1" height="1"/><rect x="784" y="360" width="1" height="1"/><rect x="785" y="336" width="1" height="1"/><rect x="785" y="340" width="1" height="1"/><rect x="785" y="344" width="1" height="1"/><rect x="785" y="349" width="1" height="1"/><rect x="785" y="352" width="1" height="1"/><rect x="785" y="357" width="1" height="1"/><rect x="785" y="361" width="1" height="1"/><rect x="786" y="337" width="1" height="1"/><rect x="786" y="340" width="1" height="1"/><rect x="786" y="345" width="1" height="1"/><rect x="786" y="348" width="1" height="1"/><rect x="786" y="353" width="1" height="1"/><rect x="786" y="357" width="1" height="1"/><rect x="787" y="337" width="1" height="1"/><rect x="787" y="339" width="1" height="1"/><rect x="787" y="345" width="1" height="1"/><rect x="787" y="348" width="1" height="1"/><rect x="787" y="353" width="1" height="1"/><rect x="787" y="356" width="1" height="1"/><rect x="788" y="338" width="1" height="1"/><rect x="788" y="339" width="1" height="1"/><rect x="788" y="345" width="1" height="1"/><rect x="788" y="347" width="1" height="1"/><rect x="788" y="354" width="1" height="1"/><rect x="788" y="356" width="1" height="1"/><rect x="789" y="339" width="1" height="1"/><rect x="789" y="346" width="1" height="1"/><rect x="789" y="347" width="1" height="1"/><rect x="789" y="354" width="1" height="1"/><rect x="789" y="355" width="1" height="1"/><rect x="790" y="338" width="1" height="1"/><rect x="790" y="346" width="1" height="1"/><rect x="790" y="355" width="1" height="1"/></g>
<polyline points="785.5,361.5 785.5,371.5" fill="none" stroke="#000000" stroke-width="1" stroke-linecap="square" stroke-linejoin="bevel"/>
<polyline points="785.5,371.5 785.5,380.5" fill="none" stroke="#000000" stroke-width="1" stroke-linecap="square" stroke-linejoin="bevel"/>
<polyline points="776.5,380.5 794.5,380.5" fill="none" stroke="#000000" stroke-width="1" stroke-linecap="square" stroke-linejoin="bevel"/>
<polyline points="779.5,383.5 791.5,383.5" fill="none" stroke="#000000" stroke-width="1" stroke-linecap="square" stroke-linejoin="bevel"/>
<polyline points="782.5,386.5 788.5,386.5" fill="none" stroke="#000000" stroke-width="1" stroke-linecap="square" stroke-linejoin="bevel"/>
<rect x="145" y="333" width="2" height="4" fill="#ff0000"/><rect x="144" y="334" width="4" height="2" fill="#ff0000"/>
<rect x="244" y="333" width="2" height="4" fill="#ff0000"/><rect x="243" y="334" width="4" height="2" fill="#ff0000"/>
<rect x="424" y="207" width="2" height="4" fill="#ff0000"/><rect x="423" y="208" width="4" height="2" fill="#ff0000"/>
<rect x="433" y="396" width="2" height="4" fill="#ff0000"/><rect x="432" y="397" width="4" height="2" fill="#ff0000"/>
<rect x="460" y="486" width="2" height="4" fill="#ff0000"/><rect x="459" y="487" width="4" height="2" fill="#ff0000"/>
<rect x="613" y="162" width="2" height="4" fill="#ff0000"/><rect x="612" y="163" width="4" height="2" fill="#ff0000"/>
<rect x="577" y="243" width="2" height="4" fill="#ff0000"/><rect x="576" y="244" width="4" height="2" fill="#ff0000"/>
<rect x="613" y="369" width="2" height="4" fill="#ff0000"/><rect x="612" y="370" width="4" height="2" fill="#ff0000"/>
<rect x="712" y="306" width="2" height="4" fill="#ff0000"/><rect x="711" y="307" width="4" height="2" fill="#ff0000"/>
<rect x="784" y="306" width="2" height="4" fill="#ff0000"/><rect x="783" y="307" width="4" height="2" fill="#ff0000"/>
<text x="183" y="324" fill="#000000" stroke="#000000" stroke-width="0.45" font-size="13.4" text-anchor="start" >R24</text>
<text x="183" y="353" fill="#000000" stroke="#000000" stroke-width="0.45" font-size="13.4" text-anchor="start" >10Ω</text>
<text x="112" y="392" fill="#000000" stroke="#000000" stroke-width="0.45" font-size="13.4" text-anchor="start" >V1</text>
<text x="112" y="410" fill="#000000" stroke="#000000" stroke-width="0.45" font-size="13.4" text-anchor="start" >35.5mVrms</text>
<text x="112" y="425" fill="#000000" stroke="#000000" stroke-width="0.45" font-size="13.4" text-anchor="start" >1000000Hz</text>
<text x="112" y="440" fill="#000000" stroke="#000000" stroke-width="0.45" font-size="13.4" text-anchor="start" >0°</text>
<text x="300" y="297" fill="#000000" stroke="#000000" stroke-width="0.45" font-size="13.4" text-anchor="start" >R23</text>
<text x="296" y="326" fill="#000000" stroke="#000000" stroke-width="0.45" font-size="13.4" text-anchor="start" >10kΩ</text>
<text x="289" y="356" fill="#000000" stroke="#000000" stroke-width="0.45" font-size="13.4" text-anchor="start" >R20</text>
<text x="289" y="374" fill="#000000" stroke="#000000" stroke-width="0.45" font-size="13.4" text-anchor="start" >910kΩ</text>
<text x="288" y="419" fill="#000000" stroke="#000000" stroke-width="0.45" font-size="13.4" text-anchor="start" >R21</text>
<text x="288" y="437" fill="#000000" stroke="#000000" stroke-width="0.45" font-size="13.4" text-anchor="start" >91kΩ</text>
<text x="288" y="482" fill="#000000" stroke="#000000" stroke-width="0.45" font-size="13.4" text-anchor="start" >R22</text>
<text x="288" y="500" fill="#000000" stroke="#000000" stroke-width="0.45" font-size="13.4" text-anchor="start" >10kΩ</text>
<text x="547" y="189" fill="#000000" stroke="#000000" stroke-width="0.45" font-size="13.4" text-anchor="start" >R2</text>
<text x="539" y="218" fill="#000000" stroke="#000000" stroke-width="0.45" font-size="13.4" text-anchor="start" >300Ω</text>
<text x="647" y="158" fill="#000000" stroke="#000000" stroke-width="0.45" font-size="13.4" text-anchor="start" >V2</text>
<text x="647" y="175" fill="#000000" stroke="#000000" stroke-width="0.45" font-size="13.4" text-anchor="start" >12V</text>
<text x="647" y="234" fill="#000000" stroke="#000000" stroke-width="0.45" font-size="13.4" text-anchor="start" >R4</text>
<text x="636" y="263" fill="#000000" stroke="#000000" stroke-width="0.45" font-size="13.4" text-anchor="start" >1.5kΩ</text>
<text x="628" y="374" fill="#000000" stroke="#000000" stroke-width="0.45" font-size="13.4" text-anchor="start" >V3</text>
<text x="628" y="392" fill="#000000" stroke="#000000" stroke-width="0.45" font-size="13.4" text-anchor="start" >12V</text>
<text x="792" y="320" fill="#000000" stroke="#000000" stroke-width="0.45" font-size="13.4" text-anchor="start" >R1</text>
<text x="792" y="338" fill="#000000" stroke="#000000" stroke-width="0.45" font-size="13.4" text-anchor="start" >10kΩ</text>
<text x="468" y="401" fill="#000000" stroke="#000000" stroke-width="0.45" font-size="13.4" text-anchor="start" >R3</text>
<text x="468" y="419" fill="#000000" stroke="#000000" stroke-width="0.45" font-size="13.4" text-anchor="start" >1kΩ</text>
<text x="468" y="434" fill="#000000" stroke="#000000" stroke-width="0.45" font-size="13.4" text-anchor="start" >Key=A</text>
<text x="522" y="419" fill="#000000" stroke="#000000" stroke-width="0.45" font-size="13.4" text-anchor="start" >10 %</text>
<text x="434" y="104" fill="#0000ff" stroke="#0000ff" stroke-width="0.45" font-size="13.4" text-anchor="start" >U2</text>
<text x="434" y="122" fill="#0000ff" stroke="#0000ff" stroke-width="0.45" font-size="13.4" text-anchor="start" >BF245A</text>
<text x="442" y="212" fill="#0000ff" stroke="#0000ff" stroke-width="0.45" font-size="13.4" text-anchor="start" >Q3</text>
<text x="442" y="230" fill="#0000ff" stroke="#0000ff" stroke-width="0.45" font-size="13.4" text-anchor="start" >BC548B</text>
<text x="435" y="301" fill="#0000ff" stroke="#0000ff" stroke-width="0.45" font-size="13.4" text-anchor="start" >U3</text>
<text x="435" y="320" fill="#0000ff" stroke="#0000ff" stroke-width="0.45" font-size="13.4" text-anchor="start" >BF245A</text>
<text x="652" y="284" fill="#0000ff" stroke="#0000ff" stroke-width="0.45" font-size="13.4" text-anchor="start" >U1</text>
<text x="652" y="358" fill="#0000ff" stroke="#0000ff" stroke-width="0.45" font-size="13.4" text-anchor="start" >LM7171BIN</text>
<text x="580" y="298" fill="#0000ff" stroke="#0000ff" stroke-width="0" font-size="7.5" text-anchor="start" >3</text>
<text x="580" y="333" fill="#0000ff" stroke="#0000ff" stroke-width="0" font-size="7.5" text-anchor="start" >2</text>
<text x="656" y="315" fill="#0000ff" stroke="#0000ff" stroke-width="0" font-size="7.5" text-anchor="start" >6</text>
<text x="0" y="0" fill="#0000ff" stroke="#0000ff" stroke-width="0" font-size="7.5" text-anchor="start" transform="translate(611,286) rotate(-90)">7</text>
<text x="0" y="0" fill="#0000ff" stroke="#0000ff" stroke-width="0" font-size="7.5" text-anchor="start" transform="translate(611,362) rotate(-90)">4</text>
</g>
<!-- bottom tabs -->
<rect x="0" y="734" width="826" height="70" fill="#f0f0f0"/>
<rect x="20" y="741" width="806" height="1" fill="#6a6a6a"/>
<rect x="19" y="741" width="1" height="23" fill="#000"/>
<rect x="0" y="764" width="20" height="1" fill="#000"/>
<rect x="0" y="769" width="826" height="1" fill="#6a6a6a"/>
<rect x="0" y="770" width="826" height="7" fill="#f4f4f4"/>
<rect x="0" y="777" width="826" height="1" fill="#a0a0a0"/>
<rect x="0" y="778" width="1503" height="26" fill="#fff"/>
<text x="-1.5" y="757" font-size="12.5" fill="#000">in *</text>
<!-- scope window -->
<defs><filter id="shd" x="-10%" y="-10%" width="120%" height="120%"><feGaussianBlur stdDeviation="6"/></filter></defs>
<rect x="822" y="12" width="700" height="776" fill="rgba(0,0,0,0.28)" filter="url(#shd)" shape-rendering="auto"/>
<rect x="1444" y="4" width="1" height="7" fill="#d8d8d8"/><rect x="1444" y="4" width="59" height="1" fill="#f8f8f8"/>
<rect x="1482" y="2" width="21" height="1" fill="#a0a0a0"/><rect x="1481" y="0" width="1" height="3" fill="#f8f8f8"/>
<path d="M1459,11 q3,-3 6,0 M1481,11 q3,-3 6,0" stroke="#000" stroke-width="1.3" fill="none" shape-rendering="auto"/>
<rect x="826" y="11" width="677" height="773" fill="#f0f0f0"/>
<rect x="826" y="11" width="677" height="1" fill="#6e6e6e"/>
<rect x="826" y="11" width="1" height="773" fill="#6e6e6e"/>
<rect x="826" y="783" width="677" height="1" fill="#6e6e6e"/>
<rect x="827" y="12" width="676" height="30" fill="#fff"/>
<rect x="827" y="42" width="676" height="1" fill="#808080"/>
<rect x="827" y="43" width="676" height="1" fill="#a0a0a0"/>
<rect x="828" y="43" width="1" height="575" fill="#a0a0a0"/>
<rect x="827" y="617" width="676" height="2" fill="#f8f8f8"/>
<rect x="827" y="619" width="676" height="1" fill="#808080"/>
<rect x="829" y="44" width="674" height="573" fill="#000"/>
<line x1="936.5" y1="55" x2="936.5" y2="609" stroke="#d0d0d0" stroke-dasharray="3 3"/>
<line x1="1034.5" y1="55" x2="1034.5" y2="609" stroke="#d0d0d0" stroke-dasharray="3 3"/>
<line x1="1132.5" y1="55" x2="1132.5" y2="609" stroke="#d0d0d0" stroke-dasharray="3 3"/>
<line x1="1230.5" y1="55" x2="1230.5" y2="609" stroke="#d0d0d0" stroke-dasharray="3 3"/>
<line x1="1328.5" y1="55" x2="1328.5" y2="609" stroke="#d0d0d0" stroke-dasharray="3 3"/>
<line x1="1426.5" y1="55" x2="1426.5" y2="609" stroke="#d0d0d0" stroke-dasharray="3 3"/>
<line x1="838" y1="146.5" x2="1503" y2="146.5" stroke="#d0d0d0" stroke-dasharray="3 3"/>
<line x1="838" y1="238.5" x2="1503" y2="238.5" stroke="#d0d0d0" stroke-dasharray="3 3"/>
<line x1="838" y1="424.5" x2="1503" y2="424.5" stroke="#d0d0d0" stroke-dasharray="3 3"/>
<line x1="838" y1="516.5" x2="1503" y2="516.5" stroke="#d0d0d0" stroke-dasharray="3 3"/>
<line x1="838" y1="53.5" x2="1503" y2="53.5" stroke="#fff"/>
<line x1="838" y1="609.5" x2="1503" y2="609.5" stroke="#fff"/>
<line x1="835" y1="331.5" x2="1503" y2="331.5" stroke="#fff"/>
<line x1="858.5" y1="329" x2="858.5" y2="335" stroke="#fff"/>
<line x1="877.5" y1="329" x2="877.5" y2="335" stroke="#fff"/>
<line x1="897.5" y1="329" x2="897.5" y2="335" stroke="#fff"/>
<line x1="916.5" y1="329" x2="916.5" y2="335" stroke="#fff"/>
<line x1="936.5" y1="325" x2="936.5" y2="340" stroke="#fff"/>
<line x1="956.5" y1="329" x2="956.5" y2="335" stroke="#fff"/>
<line x1="975.5" y1="329" x2="975.5" y2="335" stroke="#fff"/>
<line x1="995.5" y1="329" x2="995.5" y2="335" stroke="#fff"/>
<line x1="1014.5" y1="329" x2="1014.5" y2="335" stroke="#fff"/>
<line x1="1034.5" y1="325" x2="1034.5" y2="340" stroke="#fff"/>
<line x1="1054.5" y1="329" x2="1054.5" y2="335" stroke="#fff"/>
<line x1="1073.5" y1="329" x2="1073.5" y2="335" stroke="#fff"/>
<line x1="1093.5" y1="329" x2="1093.5" y2="335" stroke="#fff"/>
<line x1="1112.5" y1="329" x2="1112.5" y2="335" stroke="#fff"/>
<line x1="1132.5" y1="325" x2="1132.5" y2="340" stroke="#fff"/>
<line x1="1152.5" y1="329" x2="1152.5" y2="335" stroke="#fff"/>
<line x1="1171.5" y1="329" x2="1171.5" y2="335" stroke="#fff"/>
<line x1="1191.5" y1="329" x2="1191.5" y2="335" stroke="#fff"/>
<line x1="1210.5" y1="329" x2="1210.5" y2="335" stroke="#fff"/>
<line x1="1230.5" y1="325" x2="1230.5" y2="340" stroke="#fff"/>
<line x1="1250.5" y1="329" x2="1250.5" y2="335" stroke="#fff"/>
<line x1="1269.5" y1="329" x2="1269.5" y2="335" stroke="#fff"/>
<line x1="1289.5" y1="329" x2="1289.5" y2="335" stroke="#fff"/>
<line x1="1308.5" y1="329" x2="1308.5" y2="335" stroke="#fff"/>
<line x1="1328.5" y1="325" x2="1328.5" y2="340" stroke="#fff"/>
<line x1="1348.5" y1="329" x2="1348.5" y2="335" stroke="#fff"/>
<line x1="1367.5" y1="329" x2="1367.5" y2="335" stroke="#fff"/>
<line x1="1387.5" y1="329" x2="1387.5" y2="335" stroke="#fff"/>
<line x1="1406.5" y1="329" x2="1406.5" y2="335" stroke="#fff"/>
<line x1="1426.5" y1="325" x2="1426.5" y2="340" stroke="#fff"/>
<line x1="1446.5" y1="329" x2="1446.5" y2="335" stroke="#fff"/>
<line x1="1465.5" y1="329" x2="1465.5" y2="335" stroke="#fff"/>
<line x1="1485.5" y1="329" x2="1485.5" y2="335" stroke="#fff"/>
<line x1="1504.5" y1="329" x2="1504.5" y2="335" stroke="#fff"/>
<line x1="1524.5" y1="325" x2="1524.5" y2="340" stroke="#fff"/>
<line x1="1544.5" y1="329" x2="1544.5" y2="335" stroke="#fff"/>
<line x1="1563.5" y1="329" x2="1563.5" y2="335" stroke="#fff"/>
<line x1="1583.5" y1="329" x2="1583.5" y2="335" stroke="#fff"/>
<line x1="1602.5" y1="329" x2="1602.5" y2="335" stroke="#fff"/>
<line x1="1328.5" y1="50" x2="1328.5" y2="54" stroke="#fff"/>
<polyline points="838.0,141.84 839.0,141.98 840.0,142.24 841.0,142.61 842.0,143.09 843.0,143.67 844.0,144.36 845.0,145.16 846.0,146.05 847.0,147.03 848.0,148.11 849.0,149.27 850.0,150.52 851.0,151.84 852.0,153.24 853.0,154.70 854.0,156.22 855.0,157.79 856.0,159.41 857.0,161.07 858.0,162.76 859.0,164.48 860.0,166.22 861.0,167.97 862.0,169.73 863.0,171.48 864.0,173.23 865.0,174.95 866.0,176.66 867.0,178.33 868.0,179.97 869.0,181.56 870.0,183.10 871.0,184.59 872.0,186.01 873.0,187.36 874.0,188.64 875.0,189.83 876.0,190.95 877.0,191.97 878.0,192.90 879.0,193.73 880.0,194.46 881.0,195.09 882.0,195.61 883.0,196.03 884.0,196.33 885.0,196.52 886.0,196.60 887.0,196.56 888.0,196.42 889.0,196.16 890.0,195.79 891.0,195.31 892.0,194.73 893.0,194.04 894.0,193.24 895.0,192.35 896.0,191.37 897.0,190.29 898.0,189.13 899.0,187.88 900.0,186.56 901.0,185.16 902.0,183.70 903.0,182.18 904.0,180.61 905.0,178.99 906.0,177.33 907.0,175.64 908.0,173.92 909.0,172.18 910.0,170.43 911.0,168.67 912.0,166.92 913.0,165.17 914.0,163.45 915.0,161.74 916.0,160.07 917.0,158.43 918.0,156.84 919.0,155.30 920.0,153.81 921.0,152.39 922.0,151.04 923.0,149.76 924.0,148.57 925.0,147.45 926.0,146.43 927.0,145.50 928.0,144.67 929.0,143.94 930.0,143.31 931.0,142.79 932.0,142.37 933.0,142.07 934.0,141.88 935.0,141.80 936.0,141.84 937.0,141.98 938.0,142.24 939.0,142.61 940.0,143.09 941.0,143.67 942.0,144.36 943.0,145.16 944.0,146.05 945.0,147.03 946.0,148.11 947.0,149.27 948.0,150.52 949.0,151.84 950.0,153.24 951.0,154.70 952.0,156.22 953.0,157.79 954.0,159.41 955.0,161.07 956.0,162.76 957.0,164.48 958.0,166.22 959.0,167.97 960.0,169.73 961.0,171.48 962.0,173.23 963.0,174.95 964.0,176.66 965.0,178.33 966.0,179.97 967.0,181.56 968.0,183.10 969.0,184.59 970.0,186.01 971.0,187.36 972.0,188.64 973.0,189.83 974.0,190.95 975.0,191.97 976.0,192.90 977.0,193.73 978.0,194.46 979.0,195.09 980.0,195.61 981.0,196.03 982.0,196.33 983.0,196.52 984.0,196.60 985.0,196.56 986.0,196.42 987.0,196.16 988.0,195.79 989.0,195.31 990.0,194.73 991.0,194.04 992.0,193.24 993.0,192.35 994.0,191.37 995.0,190.29 996.0,189.13 997.0,187.88 998.0,186.56 999.0,185.16 1000.0,183.70 1001.0,182.18 1002.0,180.61 1003.0,178.99 1004.0,177.33 1005.0,175.64 1006.0,173.92 1007.0,172.18 1008.0,170.43 1009.0,168.67 1010.0,166.92 1011.0,165.17 1012.0,163.45 1013.0,161.74 1014.0,160.07 1015.0,158.43 1016.0,156.84 1017.0,155.30 1018.0,153.81 1019.0,152.39 1020.0,151.04 1021.0,149.76 1022.0,148.57 1023.0,147.45 1024.0,146.43 1025.0,145.50 1026.0,144.67 1027.0,143.94 1028.0,143.31 1029.0,142.79 1030.0,142.37 1031.0,142.07 1032.0,141.88 1033.0,141.80 1034.0,141.84 1035.0,141.98 1036.0,142.24 1037.0,142.61 1038.0,143.09 1039.0,143.67 1040.0,144.36 1041.0,145.16 1042.0,146.05 1043.0,147.03 1044.0,148.11 1045.0,149.27 1046.0,150.52 1047.0,151.84 1048.0,153.24 1049.0,154.70 1050.0,156.22 1051.0,157.79 1052.0,159.41 1053.0,161.07 1054.0,162.76 1055.0,164.48 1056.0,166.22 1057.0,167.97 1058.0,169.73 1059.0,171.48 1060.0,173.23 1061.0,174.95 1062.0,176.66 1063.0,178.33 1064.0,179.97 1065.0,181.56 1066.0,183.10 1067.0,184.59 1068.0,186.01 1069.0,187.36 1070.0,188.64 1071.0,189.83 1072.0,190.95 1073.0,191.97 1074.0,192.90 1075.0,193.73 1076.0,194.46 1077.0,195.09 1078.0,195.61 1079.0,196.03 1080.0,196.33 1081.0,196.52 1082.0,196.60 1083.0,196.56 1084.0,196.42 1085.0,196.16 1086.0,195.79 1087.0,195.31 1088.0,194.73 1089.0,194.04 1090.0,193.24 1091.0,192.35 1092.0,191.37 1093.0,190.29 1094.0,189.13 1095.0,187.88 1096.0,186.56 1097.0,185.16 1098.0,183.70 1099.0,182.18 1100.0,180.61 1101.0,178.99 1102.0,177.33 1103.0,175.64 1104.0,173.92 1105.0,172.18 1106.0,170.43 1107.0,168.67 1108.0,166.92 1109.0,165.17 1110.0,163.45 1111.0,161.74 1112.0,160.07 1113.0,158.43 1114.0,156.84 1115.0,155.30 1116.0,153.81 1117.0,152.39 1118.0,151.04 1119.0,149.76 1120.0,148.57 1121.0,147.45 1122.0,146.43 1123.0,145.50 1124.0,144.67 1125.0,143.94 1126.0,143.31 1127.0,142.79 1128.0,142.37 1129.0,142.07 1130.0,141.88 1131.0,141.80 1132.0,141.84 1133.0,141.98 1134.0,142.24 1135.0,142.61 1136.0,143.09 1137.0,143.67 1138.0,144.36 1139.0,145.16 1140.0,146.05 1141.0,147.03 1142.0,148.11 1143.0,149.27 1144.0,150.52 1145.0,151.84 1146.0,153.24 1147.0,154.70 1148.0,156.22 1149.0,157.79 1150.0,159.41 1151.0,161.07 1152.0,162.76 1153.0,164.48 1154.0,166.22 1155.0,167.97 1156.0,169.73 1157.0,171.48 1158.0,173.23 1159.0,174.95 1160.0,176.66 1161.0,178.33 1162.0,179.97 1163.0,181.56 1164.0,183.10 1165.0,184.59 1166.0,186.01 1167.0,187.36 1168.0,188.64 1169.0,189.83 1170.0,190.95 1171.0,191.97 1172.0,192.90 1173.0,193.73 1174.0,194.46 1175.0,195.09 1176.0,195.61 1177.0,196.03 1178.0,196.33 1179.0,196.52 1180.0,196.60 1181.0,196.56 1182.0,196.42 1183.0,196.16 1184.0,195.79 1185.0,195.31 1186.0,194.73 1187.0,194.04 1188.0,193.24 1189.0,192.35 1190.0,191.37 1191.0,190.29 1192.0,189.13 1193.0,187.88 1194.0,186.56 1195.0,185.16 1196.0,183.70 1197.0,182.18 1198.0,180.61 1199.0,178.99 1200.0,177.33 1201.0,175.64 1202.0,173.92 1203.0,172.18 1204.0,170.43 1205.0,168.67 1206.0,166.92 1207.0,165.17 1208.0,163.45 1209.0,161.74 1210.0,160.07 1211.0,158.43 1212.0,156.84 1213.0,155.30 1214.0,153.81 1215.0,152.39 1216.0,151.04 1217.0,149.76 1218.0,148.57 1219.0,147.45 1220.0,146.43 1221.0,145.50 1222.0,144.67 1223.0,143.94 1224.0,143.31 1225.0,142.79 1226.0,142.37 1227.0,142.07 1228.0,141.88 1229.0,141.80 1230.0,141.84 1231.0,141.98 1232.0,142.24 1233.0,142.61 1234.0,143.09 1235.0,143.67 1236.0,144.36 1237.0,145.16 1238.0,146.05 1239.0,147.03 1240.0,148.11 1241.0,149.27 1242.0,150.52 1243.0,151.84 1244.0,153.24 1245.0,154.70 1246.0,156.22 1247.0,157.79 1248.0,159.41 1249.0,161.07 1250.0,162.76 1251.0,164.48 1252.0,166.22 1253.0,167.97 1254.0,169.73 1255.0,171.48 1256.0,173.23 1257.0,174.95 1258.0,176.66 1259.0,178.33 1260.0,179.97 1261.0,181.56 1262.0,183.10 1263.0,184.59 1264.0,186.01 1265.0,187.36 1266.0,188.64 1267.0,189.83 1268.0,190.95 1269.0,191.97 1270.0,192.90 1271.0,193.73 1272.0,194.46 1273.0,195.09 1274.0,195.61 1275.0,196.03 1276.0,196.33 1277.0,196.52 1278.0,196.60 1279.0,196.56 1280.0,196.42 1281.0,196.16 1282.0,195.79 1283.0,195.31 1284.0,194.73 1285.0,194.04 1286.0,193.24 1287.0,192.35 1288.0,191.37 1289.0,190.29 1290.0,189.13 1291.0,187.88 1292.0,186.56 1293.0,185.16 1294.0,183.70 1295.0,182.18 1296.0,180.61 1297.0,178.99 1298.0,177.33 1299.0,175.64 1300.0,173.92 1301.0,172.18 1302.0,170.43 1303.0,168.67 1304.0,166.92 1305.0,165.17 1306.0,163.45 1307.0,161.74 1308.0,160.07 1309.0,158.43 1310.0,156.84 1311.0,155.30 1312.0,153.81 1313.0,152.39 1314.0,151.04 1315.0,149.76 1316.0,148.57 1317.0,147.45 1318.0,146.43 1319.0,145.50 1320.0,144.67 1321.0,143.94 1322.0,143.31 1323.0,142.79 1324.0,142.37 1325.0,142.07 1326.0,141.88 1327.0,141.80 1328.0,141.84 1329.0,141.98 1330.0,142.24 1331.0,142.61 1332.0,143.09 1333.0,143.67 1334.0,144.36 1335.0,145.16 1336.0,146.05 1337.0,147.03 1338.0,148.11 1339.0,149.27 1340.0,150.52 1341.0,151.84 1342.0,153.24 1343.0,154.70 1344.0,156.22 1345.0,157.79 1346.0,159.41 1347.0,161.07 1348.0,162.76 1349.0,164.48 1350.0,166.22 1351.0,167.97 1352.0,169.73 1353.0,171.48 1354.0,173.23 1355.0,174.95 1356.0,176.66 1357.0,178.33 1358.0,179.97 1359.0,181.56 1360.0,183.10 1361.0,184.59 1362.0,186.01 1363.0,187.36 1364.0,188.64 1365.0,189.83 1366.0,190.95 1367.0,191.97 1368.0,192.90 1369.0,193.73 1370.0,194.46 1371.0,195.09 1372.0,195.61 1373.0,196.03 1374.0,196.33 1375.0,196.52 1376.0,196.60 1377.0,196.56 1378.0,196.42 1379.0,196.16 1380.0,195.79 1381.0,195.31 1382.0,194.73 1383.0,194.04 1384.0,193.24 1385.0,192.35 1386.0,191.37 1387.0,190.29 1388.0,189.13 1389.0,187.88 1390.0,186.56 1391.0,185.16 1392.0,183.70 1393.0,182.18 1394.0,180.61 1395.0,178.99" fill="none" stroke="#ff0000" stroke-width="1.3"/>
<polyline points="838.0,285.66 839.0,285.91 840.0,286.34 841.0,286.96 842.0,287.76 843.0,288.74 844.0,289.90 845.0,291.23 846.0,292.73 847.0,294.39 848.0,296.19 849.0,298.15 850.0,300.24 851.0,302.46 852.0,304.80 853.0,307.25 854.0,309.80 855.0,312.44 856.0,315.16 857.0,317.95 858.0,320.79 859.0,323.68 860.0,326.60 861.0,329.54 862.0,332.48 863.0,335.43 864.0,338.36 865.0,341.26 866.0,344.12 867.0,346.93 868.0,349.68 869.0,352.35 870.0,354.94 871.0,357.43 872.0,359.82 873.0,362.09 874.0,364.23 875.0,366.24 876.0,368.11 877.0,369.83 878.0,371.39 879.0,372.79 880.0,374.01 881.0,375.07 882.0,375.94 883.0,376.64 884.0,377.14 885.0,377.46 886.0,377.60 887.0,377.54 888.0,377.29 889.0,376.86 890.0,376.24 891.0,375.44 892.0,374.46 893.0,373.30 894.0,371.97 895.0,370.47 896.0,368.81 897.0,367.01 898.0,365.05 899.0,362.96 900.0,360.74 901.0,358.40 902.0,355.95 903.0,353.40 904.0,350.76 905.0,348.04 906.0,345.25 907.0,342.41 908.0,339.52 909.0,336.60 910.0,333.66 911.0,330.72 912.0,327.77 913.0,324.84 914.0,321.94 915.0,319.08 916.0,316.27 917.0,313.52 918.0,310.85 919.0,308.26 920.0,305.77 921.0,303.38 922.0,301.11 923.0,298.97 924.0,296.96 925.0,295.09 926.0,293.37 927.0,291.81 928.0,290.41 929.0,289.19 930.0,288.13 931.0,287.26 932.0,286.56 933.0,286.06 934.0,285.74 935.0,285.60 936.0,285.66 937.0,285.91 938.0,286.34 939.0,286.96 940.0,287.76 941.0,288.74 942.0,289.90 943.0,291.23 944.0,292.73 945.0,294.39 946.0,296.19 947.0,298.15 948.0,300.24 949.0,302.46 950.0,304.80 951.0,307.25 952.0,309.80 953.0,312.44 954.0,315.16 955.0,317.95 956.0,320.79 957.0,323.68 958.0,326.60 959.0,329.54 960.0,332.48 961.0,335.43 962.0,338.36 963.0,341.26 964.0,344.12 965.0,346.93 966.0,349.68 967.0,352.35 968.0,354.94 969.0,357.43 970.0,359.82 971.0,362.09 972.0,364.23 973.0,366.24 974.0,368.11 975.0,369.83 976.0,371.39 977.0,372.79 978.0,374.01 979.0,375.07 980.0,375.94 981.0,376.64 982.0,377.14 983.0,377.46 984.0,377.60 985.0,377.54 986.0,377.29 987.0,376.86 988.0,376.24 989.0,375.44 990.0,374.46 991.0,373.30 992.0,371.97 993.0,370.47 994.0,368.81 995.0,367.01 996.0,365.05 997.0,362.96 998.0,360.74 999.0,358.40 1000.0,355.95 1001.0,353.40 1002.0,350.76 1003.0,348.04 1004.0,345.25 1005.0,342.41 1006.0,339.52 1007.0,336.60 1008.0,333.66 1009.0,330.72 1010.0,327.77 1011.0,324.84 1012.0,321.94 1013.0,319.08 1014.0,316.27 1015.0,313.52 1016.0,310.85 1017.0,308.26 1018.0,305.77 1019.0,303.38 1020.0,301.11 1021.0,298.97 1022.0,296.96 1023.0,295.09 1024.0,293.37 1025.0,291.81 1026.0,290.41 1027.0,289.19 1028.0,288.13 1029.0,287.26 1030.0,286.56 1031.0,286.06 1032.0,285.74 1033.0,285.60 1034.0,285.66 1035.0,285.91 1036.0,286.34 1037.0,286.96 1038.0,287.76 1039.0,288.74 1040.0,289.90 1041.0,291.23 1042.0,292.73 1043.0,294.39 1044.0,296.19 1045.0,298.15 1046.0,300.24 1047.0,302.46 1048.0,304.80 1049.0,307.25 1050.0,309.80 1051.0,312.44 1052.0,315.16 1053.0,317.95 1054.0,320.79 1055.0,323.68 1056.0,326.60 1057.0,329.54 1058.0,332.48 1059.0,335.43 1060.0,338.36 1061.0,341.26 1062.0,344.12 1063.0,346.93 1064.0,349.68 1065.0,352.35 1066.0,354.94 1067.0,357.43 1068.0,359.82 1069.0,362.09 1070.0,364.23 1071.0,366.24 1072.0,368.11 1073.0,369.83 1074.0,371.39 1075.0,372.79 1076.0,374.01 1077.0,375.07 1078.0,375.94 1079.0,376.64 1080.0,377.14 1081.0,377.46 1082.0,377.60 1083.0,377.54 1084.0,377.29 1085.0,376.86 1086.0,376.24 1087.0,375.44 1088.0,374.46 1089.0,373.30 1090.0,371.97 1091.0,370.47 1092.0,368.81 1093.0,367.01 1094.0,365.05 1095.0,362.96 1096.0,360.74 1097.0,358.40 1098.0,355.95 1099.0,353.40 1100.0,350.76 1101.0,348.04 1102.0,345.25 1103.0,342.41 1104.0,339.52 1105.0,336.60 1106.0,333.66 1107.0,330.72 1108.0,327.77 1109.0,324.84 1110.0,321.94 1111.0,319.08 1112.0,316.27 1113.0,313.52 1114.0,310.85 1115.0,308.26 1116.0,305.77 1117.0,303.38 1118.0,301.11 1119.0,298.97 1120.0,296.96 1121.0,295.09 1122.0,293.37 1123.0,291.81 1124.0,290.41 1125.0,289.19 1126.0,288.13 1127.0,287.26 1128.0,286.56 1129.0,286.06 1130.0,285.74 1131.0,285.60 1132.0,285.66 1133.0,285.91 1134.0,286.34 1135.0,286.96 1136.0,287.76 1137.0,288.74 1138.0,289.90 1139.0,291.23 1140.0,292.73 1141.0,294.39 1142.0,296.19 1143.0,298.15 1144.0,300.24 1145.0,302.46 1146.0,304.80 1147.0,307.25 1148.0,309.80 1149.0,312.44 1150.0,315.16 1151.0,317.95 1152.0,320.79 1153.0,323.68 1154.0,326.60 1155.0,329.54 1156.0,332.48 1157.0,335.43 1158.0,338.36 1159.0,341.26 1160.0,344.12 1161.0,346.93 1162.0,349.68 1163.0,352.35 1164.0,354.94 1165.0,357.43 1166.0,359.82 1167.0,362.09 1168.0,364.23 1169.0,366.24 1170.0,368.11 1171.0,369.83 1172.0,371.39 1173.0,372.79 1174.0,374.01 1175.0,375.07 1176.0,375.94 1177.0,376.64 1178.0,377.14 1179.0,377.46 1180.0,377.60 1181.0,377.54 1182.0,377.29 1183.0,376.86 1184.0,376.24 1185.0,375.44 1186.0,374.46 1187.0,373.30 1188.0,371.97 1189.0,370.47 1190.0,368.81 1191.0,367.01 1192.0,365.05 1193.0,362.96 1194.0,360.74 1195.0,358.40 1196.0,355.95 1197.0,353.40 1198.0,350.76 1199.0,348.04 1200.0,345.25 1201.0,342.41 1202.0,339.52 1203.0,336.60 1204.0,333.66 1205.0,330.72 1206.0,327.77 1207.0,324.84 1208.0,321.94 1209.0,319.08 1210.0,316.27 1211.0,313.52 1212.0,310.85 1213.0,308.26 1214.0,305.77 1215.0,303.38 1216.0,301.11 1217.0,298.97 1218.0,296.96 1219.0,295.09 1220.0,293.37 1221.0,291.81 1222.0,290.41 1223.0,289.19 1224.0,288.13 1225.0,287.26 1226.0,286.56 1227.0,286.06 1228.0,285.74 1229.0,285.60 1230.0,285.66 1231.0,285.91 1232.0,286.34 1233.0,286.96 1234.0,287.76 1235.0,288.74 1236.0,289.90 1237.0,291.23 1238.0,292.73 1239.0,294.39 1240.0,296.19 1241.0,298.15 1242.0,300.24 1243.0,302.46 1244.0,304.80 1245.0,307.25 1246.0,309.80 1247.0,312.44 1248.0,315.16 1249.0,317.95 1250.0,320.79 1251.0,323.68 1252.0,326.60 1253.0,329.54 1254.0,332.48 1255.0,335.43 1256.0,338.36 1257.0,341.26 1258.0,344.12 1259.0,346.93 1260.0,349.68 1261.0,352.35 1262.0,354.94 1263.0,357.43 1264.0,359.82 1265.0,362.09 1266.0,364.23 1267.0,366.24 1268.0,368.11 1269.0,369.83 1270.0,371.39 1271.0,372.79 1272.0,374.01 1273.0,375.07 1274.0,375.94 1275.0,376.64 1276.0,377.14 1277.0,377.46 1278.0,377.60 1279.0,377.54 1280.0,377.29 1281.0,376.86 1282.0,376.24 1283.0,375.44 1284.0,374.46 1285.0,373.30 1286.0,371.97 1287.0,370.47 1288.0,368.81 1289.0,367.01 1290.0,365.05 1291.0,362.96 1292.0,360.74 1293.0,358.40 1294.0,355.95 1295.0,353.40 1296.0,350.76 1297.0,348.04 1298.0,345.25 1299.0,342.41 1300.0,339.52 1301.0,336.60 1302.0,333.66 1303.0,330.72 1304.0,327.77 1305.0,324.84 1306.0,321.94 1307.0,319.08 1308.0,316.27 1309.0,313.52 1310.0,310.85 1311.0,308.26 1312.0,305.77 1313.0,303.38 1314.0,301.11 1315.0,298.97 1316.0,296.96 1317.0,295.09 1318.0,293.37 1319.0,291.81 1320.0,290.41 1321.0,289.19 1322.0,288.13 1323.0,287.26 1324.0,286.56 1325.0,286.06 1326.0,285.74 1327.0,285.60 1328.0,285.66 1329.0,285.91 1330.0,286.34 1331.0,286.96 1332.0,287.76 1333.0,288.74 1334.0,289.90 1335.0,291.23 1336.0,292.73 1337.0,294.39 1338.0,296.19 1339.0,298.15 1340.0,300.24 1341.0,302.46 1342.0,304.80 1343.0,307.25 1344.0,309.80 1345.0,312.44 1346.0,315.16 1347.0,317.95 1348.0,320.79 1349.0,323.68 1350.0,326.60 1351.0,329.54 1352.0,332.48 1353.0,335.43 1354.0,338.36 1355.0,341.26 1356.0,344.12 1357.0,346.93 1358.0,349.68 1359.0,352.35 1360.0,354.94 1361.0,357.43 1362.0,359.82 1363.0,362.09 1364.0,364.23 1365.0,366.24 1366.0,368.11 1367.0,369.83 1368.0,371.39 1369.0,372.79 1370.0,374.01 1371.0,375.07 1372.0,375.94 1373.0,376.64 1374.0,377.14 1375.0,377.46 1376.0,377.60 1377.0,377.54 1378.0,377.29 1379.0,376.86 1380.0,376.24 1381.0,375.44 1382.0,374.46 1383.0,373.30 1384.0,371.97 1385.0,370.47 1386.0,368.81 1387.0,367.01 1388.0,365.05 1389.0,362.96 1390.0,360.74 1391.0,358.40 1392.0,355.95 1393.0,353.40 1394.0,350.76 1395.0,348.04" fill="none" stroke="#ff0000" stroke-width="1.3"/>
<line x1="838.5" y1="53" x2="838.5" y2="610" stroke="#00ff00"/>
<polygon points="830,45 847,45 838.5,53.5" fill="#ff00ff"/>
<polygon points="830,45 847,45 845,47 832,47" fill="#00ffff"/>
<rect x="837" y="46" width="3" height="5" fill="#000"/><rect x="837" y="47" width="2" height="1" fill="#ffff00"/><rect x="837" y="49" width="1" height="1" fill="#ffff00"/><rect x="837" y="51" width="3" height="1" fill="#00ffff"/>
<circle cx="838.5" cy="142.5" r="3" fill="none" stroke="#ff00ff"/>
<rect x="827" y="636" width="676" height="1" fill="#a0a0a0"/>
<rect x="827" y="636" width="59" height="59" fill="none" stroke="#a0a0a0"/>
<rect x="887" y="636" width="616" height="59" fill="#fff"/>
<rect x="887" y="636" width="616" height="1" fill="#6e6e6e"/>
<rect x="887" y="636" width="1" height="59" fill="#6e6e6e"/>
<rect x="888" y="637" width="1" height="58" fill="#a0a0a0"/>
<rect x="887" y="694" width="616" height="1" fill="#e0e0e0"/>
</svg>
<div class="abs" style="left:835px;top:20px;font-size:11.5px;color:#000;transform:scaleY(1.12);transform-origin:0 0">Oscilloscope-XSC1</div>
<svg class="abs" style="left:826px;top:615px" width="20" height="20"><path d="M12,8 L8,11.5 L12,15" stroke="#606060" stroke-width="2" fill="none"/></svg>
<div class="ui" style="left:833px;top:645px">T1</div>
<div class="ui" style="left:833px;top:660px">T2</div>
<div class="ui" style="left:833px;top:680px">T2-T1</div>
<div class="btn" style="left:853px;top:644px;width:14px;height:15px"></div>
<div class="btn" style="left:853px;top:662px;width:14px;height:15px"></div>
<div class="btn" style="left:870px;top:644px;width:14px;height:15px"></div>
<div class="btn" style="left:870px;top:662px;width:14px;height:15px"></div>
<svg class="abs" style="left:0;top:0" width="1503" height="804"><polygon points="855.5,651.5 861,647.0 861,650.0 865,650.0 865,653.0 861,653.0 861,656.0" fill="#000"/><polygon points="881.5,651.5 876,647.0 876,650.0 872,650.0 872,653.0 876,653.0 876,656.0" fill="#000"/><polygon points="855.5,669.5 861,665.0 861,668.0 865,668.0 865,671.0 861,671.0 861,674.0" fill="#000"/><polygon points="881.5,669.5 876,665.0 876,668.0 872,668.0 872,671.0 876,671.0 876,674.0" fill="#000"/></svg>
<div class="ui" style="left:873px;width:100px;text-align:center;top:639px">Time</div>
<div class="ui" style="left:953px;width:100px;text-align:center;top:639px">Channel_A</div>
<div class="ui" style="left:1033px;width:100px;text-align:center;top:639px">Channel_B</div>
<div class="ui" style="left:873px;width:100px;text-align:center;top:652px">2.267 ms</div>
<div class="ui" style="left:953px;width:100px;text-align:center;top:652px">2.041 V</div>
<div class="ui" style="left:1033px;width:100px;text-align:center;top:652px">49.538 mV</div>
<div class="ui" style="left:873px;width:100px;text-align:center;top:665px">2.267 ms</div>
<div class="ui" style="left:953px;width:100px;text-align:center;top:665px">2.041 V</div>
<div class="ui" style="left:1033px;width:100px;text-align:center;top:665px">49.538 mV</div>
<div class="ui" style="left:873px;width:100px;text-align:center;top:678px">0.000 s</div>
<div class="ui" style="left:953px;width:100px;text-align:center;top:678px">0.000 V</div>
<div class="ui" style="left:1033px;width:100px;text-align:center;top:678px">0.000 V</div>
<div class="abs" style="left:828px;top:709px;width:242px;height:73px;border-top:1px solid #dcdcdc;border-left:1px solid #dcdcdc;border-right:1px solid #dcdcdc"></div>
<div class="ui" style="left:833px;top:704px;background:#f0f0f0;padding:0 3px">Timebase</div>
<div class="abs" style="left:1071px;top:709px;width:241px;height:73px;border-top:1px solid #dcdcdc;border-left:1px solid #dcdcdc;border-right:1px solid #dcdcdc"></div>
<div class="ui" style="left:1077px;top:704px;background:#f0f0f0;padding:0 3px">Channel A</div>
<div class="abs" style="left:1313px;top:709px;width:207px;height:73px;border-top:1px solid #dcdcdc;border-left:1px solid #dcdcdc;border-right:1px solid #dcdcdc"></div>
<div class="ui" style="left:1318px;top:704px;background:#f0f0f0;padding:0 3px">Channel B</div>

<div class="ui" style="left:830px;top:722px">Scale:</div>
<div class="ui" style="left:830px;top:741px">X pos.(Div):</div>
<div class="inp" style="left:923px;top:716px;width:142px;height:19px">1 us/Div</div>
<div class="inp" style="left:948px;top:737px;width:117px;height:20px">0</div>
<div class="btn sel" style="left:835px;top:761px;width:52px;height:17px;line-height:16px">Y/T</div>
<div class="btn" style="left:889px;top:761px;width:55px;height:17px;line-height:16px">Add</div>
<div class="btn" style="left:948px;top:761px;width:55px;height:17px;line-height:16px">B/A</div>
<div class="btn" style="left:1005px;top:761px;width:55px;height:17px;line-height:16px">A/B</div>
<div class="ui" style="left:1074px;top:722px">Scale:</div>
<div class="ui" style="left:1074px;top:741px">Y pos.(Div):</div>
<div class="inp" style="left:1167px;top:716px;width:143px;height:19px">1&nbsp; V/Div</div>
<div class="inp" style="left:1193px;top:737px;width:117px;height:20px">0</div>
<div class="btn" style="left:1075px;top:761px;width:52px;height:17px;line-height:16px">AC</div>
<div class="btn" style="left:1129px;top:761px;width:54px;height:17px;line-height:16px">0</div>
<div class="btn sel" style="left:1185px;top:761px;width:53px;height:17px;line-height:16px">DC</div>
<div class="abs" style="left:1292px;top:763px;width:12px;height:12px;border-radius:6px;border:1px solid #d8d8d8;background:#f8f8f8"><div class="abs" style="left:2.5px;top:2.5px;width:5px;height:5px;border-radius:3px;background:#cfcfcf"></div></div>
<div class="ui" style="left:1316px;top:722px">Scale:</div>
<div class="ui" style="left:1316px;top:741px">Y pos.(Div):</div>
<div class="inp" style="left:1410px;top:716px;width:100px;height:19px">100 mV/Div</div>
<div class="inp" style="left:1436px;top:737px;width:80px;height:20px">0</div>
<div class="btn" style="left:1318px;top:762px;width:46px;height:17px;line-height:16px">AC</div>
<div class="btn" style="left:1366px;top:762px;width:45px;height:17px;line-height:16px">0</div>
<div class="btn sel" style="left:1413px;top:762px;width:47px;height:17px;line-height:16px">DC</div>
<div class="btn" style="left:1462px;top:762px;width:41px;height:17px;line-height:16px">-</div>
<svg class="abs" style="left:0;top:0" width="500" height="31">
<g fill="#8c8c8c">
<rect x="0" y="10" width="7" height="9"/><rect x="1" y="12" width="2" height="3" fill="#f0f0f0"/><rect x="0" y="20" width="3" height="5"/><rect x="4" y="21" width="3" height="4"/>
<rect x="17.5" y="10.5" width="8" height="13" rx="3.5" fill="none" stroke="#8c8c8c"/><rect x="20" y="13" width="1" height="8"/><rect x="23" y="13" width="1" height="8"/><rect x="19" y="23" width="5" height="2"/>
<rect x="47" y="10" width="10" height="2.5"/><rect x="48.5" y="15" width="7" height="10"/>
<rect x="47" y="16" width="10" height="1"/><rect x="47" y="19" width="10" height="1"/><rect x="47" y="22" width="10" height="1"/>
<rect x="76.5" y="11.5" width="6" height="4" fill="none" stroke="#8c8c8c"/><rect x="83.5" y="18.5" width="6" height="4" fill="none" stroke="#8c8c8c"/>
<rect x="78" y="16" width="1" height="1"/><rect x="78" y="18" width="1" height="1"/><rect x="78" y="20" width="1" height="1"/><rect x="80" y="20" width="1" height="1"/>
<rect x="103" y="12" width="2" height="11"/><rect x="103" y="12" width="6" height="2"/><rect x="99" y="21" width="6" height="2"/>
<polygon points="382,10 389,15 389,22 382,25"/>
<polygon points="398.20,18.00 396.17,20.14 396.09,23.09 393.14,23.17 391.00,25.20 388.86,23.17 385.91,23.09 385.83,20.14 383.80,18.00 385.83,15.86 385.91,12.91 388.86,12.83 391.00,10.80 393.14,12.83 396.09,12.91 396.17,15.86"/>
<polygon points="410,12 417,18.5 410,25"/>
</g>
<circle cx="391" cy="18" r="2.6" fill="none" stroke="#f0f0f0" stroke-width="1.2"/>
<rect x="401" y="7" width="21" height="20" fill="#f5f5f5"/>
<rect x="401" y="7" width="21" height="1" fill="#a0a0a0"/><rect x="401" y="7" width="1" height="20" fill="#a0a0a0"/>
<rect x="401" y="26" width="21" height="1" fill="#fff"/><rect x="421" y="7" width="1" height="20" fill="#fff"/>
<polygon points="410,12 417,18.5 410,25" fill="#8c8c8c"/>
<rect x="430" y="13" width="4" height="9" fill="#000"/><rect x="431" y="14" width="2" height="7" fill="#0000ff"/>
<rect x="435" y="13" width="4" height="9" fill="#000"/><rect x="436" y="14" width="2" height="7" fill="#0000ff"/>
<rect x="451" y="13" width="11" height="9" fill="#000"/><rect x="452" y="14" width="9" height="7" fill="#ff0000"/>
</svg>
</div></body></html>
